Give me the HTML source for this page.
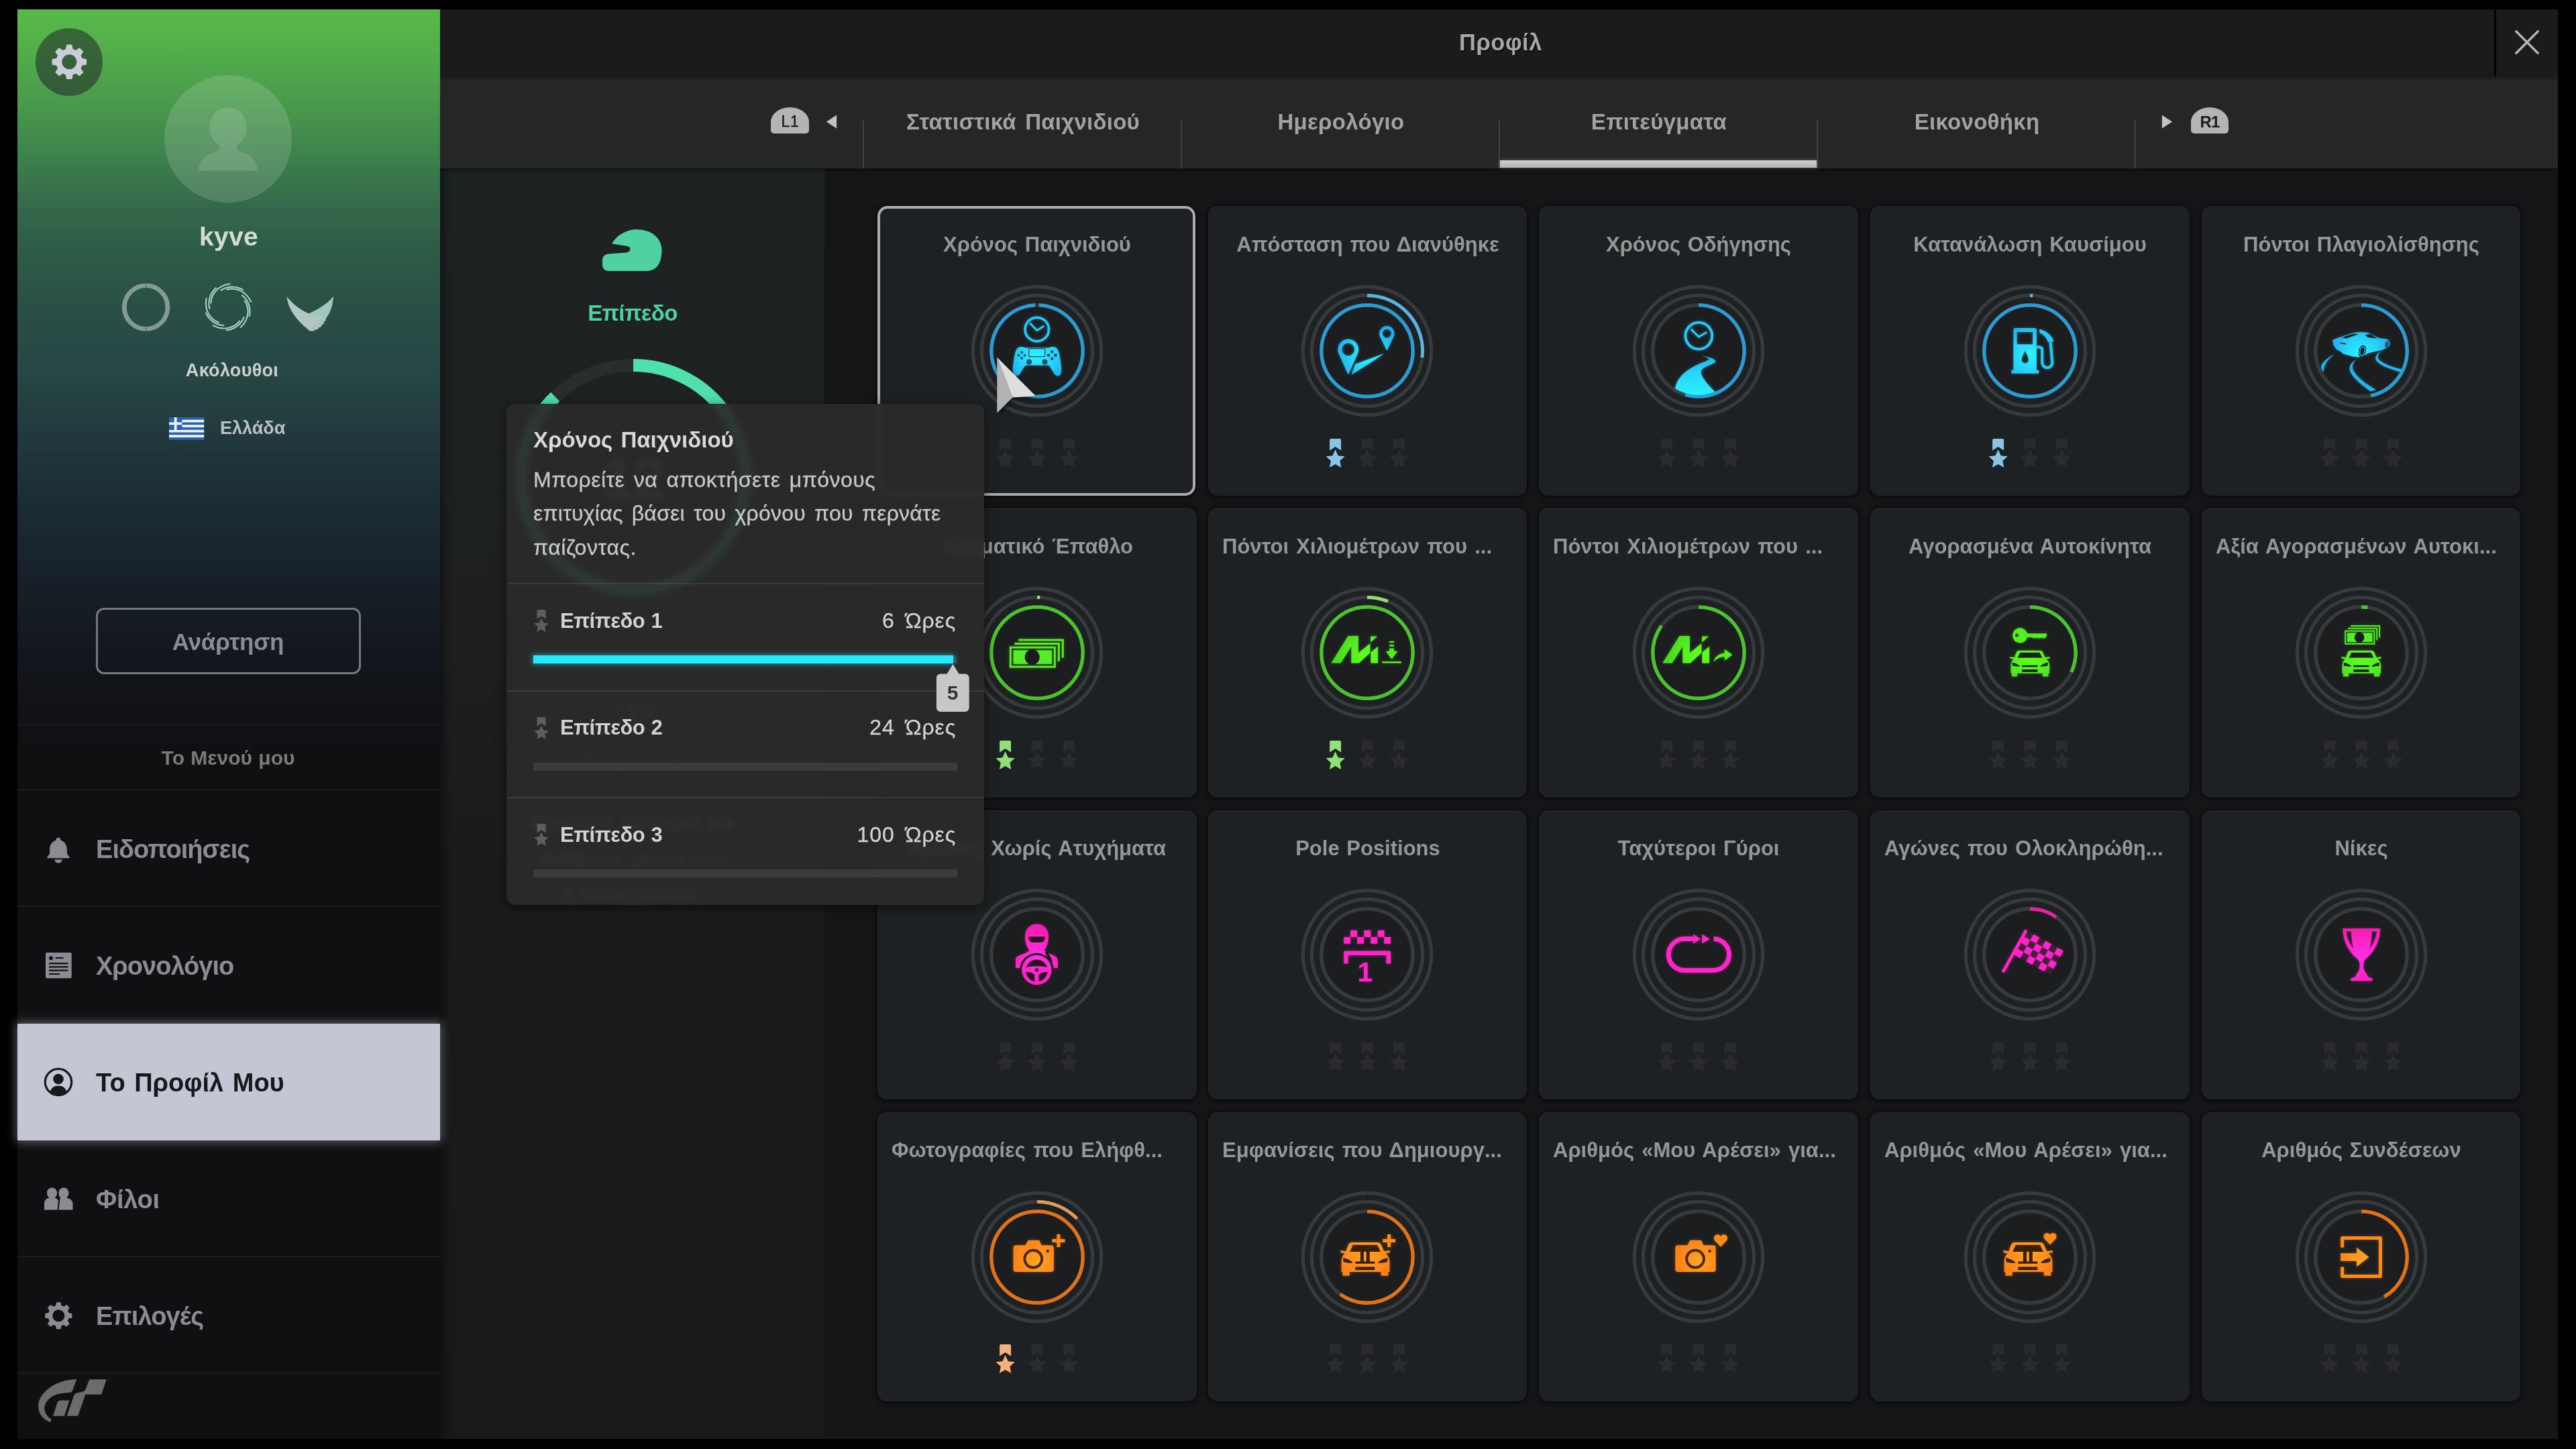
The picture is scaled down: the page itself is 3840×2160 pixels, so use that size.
<!DOCTYPE html><html lang="el"><head><meta charset="utf-8"><title>Προφίλ</title><style>
html,body{margin:0;padding:0;background:#000;}
body{width:3840px;height:2160px;position:relative;overflow:hidden;font-family:"Liberation Sans",sans-serif;font-weight:bold;}
.t{position:absolute;white-space:nowrap;line-height:1;will-change:transform;}
.a{position:absolute;overflow:visible;}
#sb{position:absolute;left:26px;top:14px;width:630px;height:2131px;background:linear-gradient(180deg,#58ba4a 0px,#52ad4b 62px,#4a9a4c 138px,#3e834c 214px,#356a4a 290px,#2d5a47 366px,#2a5046 442px,#284945 517px,#243f41 593px,#1f353b 669px,#1b2b34 745px,#18232c 821px,#151c24 897px,#13161c 973px,#111216 1049px,#101012 1110px,#101012 100%);}
.ln{position:absolute;left:26px;width:630px;height:2px;background:#1d1d20;}
#topbar{position:absolute;left:656px;top:14px;width:3157px;height:100px;background:#1b1b1b;}
#tabbar{box-shadow:0 3px 7px rgba(0,0,0,0.45);position:absolute;left:656px;top:113px;width:3157px;height:137.500px;background:linear-gradient(180deg,#181919 0,#252727 9px,#252727 100%);}
#lvl{position:absolute;left:656px;top:250.500px;width:573px;height:1894.500px;background:linear-gradient(180deg,#1f2223 0,#1e2122 25%,#1b1b1c 55%,#19191a 100%);box-shadow:inset 16px 0 14px -10px rgba(0,0,0,0.45);}
#main{position:absolute;left:1229px;top:250.500px;width:2584px;height:1894.500px;background:#161618;}
.card{position:absolute;width:475.500px;height:431.800px;box-sizing:border-box;background:#1e2123;border-radius:14px;box-shadow:0 0 0 1px rgba(10,10,12,0.55),0 1px 7px 2px rgba(0,0,0,0.55),inset 1px 1px 0 rgba(255,255,255,0.03);}
.card.sel{border:4.500px solid #aaaaaa;border-radius:15px;width:474px;}
#tip{position:absolute;left:754.500px;top:601.500px;width:712px;height:747.700px;border-radius:13px;background:rgba(42,42,42,0.93);-webkit-backdrop-filter:blur(4px);backdrop-filter:blur(4px);box-shadow:0 4px 16px 2px rgba(0,0,0,0.42);}
</style></head><body>
<div id="main"></div>
<div id="lvl"></div>
<svg class="a" style="left:898.2px;top:342.4px" width="89" height="62.500" viewBox="0 0 89 62.500"><path fill="#4fd1a1" d="M14.300,21.300 C20,10 35,0 51,0 C72,0 88.500,12 88.500,31 C88.500,48 82,62 66,62 H10 C3,62 0,58 0,52 V46 C0,40 4,37 9,36.500 L35,34.500 C40,34 41.500,31 41.500,29 C41.500,27 40,25.500 37,25Z"/></svg>
<div class="t" style="top:449.8px;font-size:33px;color:#4fd1a1;letter-spacing:-0.55px;left:-57.5px;width:2000px;text-align:center;">Επίπεδο</div>
<svg class="a" style="left:744px;top:511.800px" width="400" height="400" viewBox="-200 -200 400 400"><circle r="167.5" fill="none" stroke="#2b2d2d" stroke-width="19"/><path d="M0,-167.5 A167.5,167.5 0 1 1 -116.36,-120.49" fill="none" stroke="#4fe0ac" stroke-width="19"/></svg>
<div class="t" style="top:669.9px;font-size:84px;color:#e0e0e0;left:-56.0px;width:2000px;text-align:center;opacity:0.55;">12</div>
<div class="t" style="top:1043.1px;font-size:40px;color:#e0e0e0;font-weight:normal;left:-56.0px;width:2000px;text-align:center;opacity:0.5;">119</div>
<div class="t" style="top:1119.5px;font-size:36px;color:#4fd1a1;left:-56.0px;width:2000px;text-align:center;opacity:0.5;">Εμπειρία</div>
<div class="t" style="top:1209.9px;font-size:32px;color:#d4d4d4;font-weight:normal;left:-56.0px;width:2000px;text-align:center;opacity:0.8;">Κερδίστε εμπειρία και</div>
<div class="t" style="top:1263.9px;font-size:32px;color:#d4d4d4;font-weight:normal;left:-56.0px;width:2000px;text-align:center;opacity:0.8;">βαθμούς μέσω των</div>
<div class="t" style="top:1314.9px;font-size:32px;color:#d4d4d4;font-weight:normal;left:-56.0px;width:2000px;text-align:center;opacity:0.8;">Επιτευγμάτων.</div>
<div id="topbar"></div>
<div id="tabbar"></div>
<div class="t" style="top:46.1px;font-size:34.5px;color:#a6a6a6;letter-spacing:0.5px;left:1236.8px;width:2000px;text-align:center;text-shadow:1.5px 2px 1px rgba(0,0,0,0.55);">Προφίλ</div>
<div style="position:absolute;left:3718px;top:14px;width:3px;height:98.500px;background:#000"></div>
<svg class="a" style="left:3746px;top:42px" width="42" height="42" viewBox="-21 -21 42 42"><path d="M-17.200,-17.200L17.200,17.200M17.200,-17.200L-17.200,17.200" stroke="#b5b5b5" stroke-width="3.4"/></svg>
<div style="position:absolute;left:1285.8px;top:178.5px;width:2px;height:72px;background:#3f4141"></div>
<div style="position:absolute;left:1760px;top:178.5px;width:2px;height:72px;background:#3f4141"></div>
<div style="position:absolute;left:2234px;top:178.5px;width:2px;height:72px;background:#3f4141"></div>
<div style="position:absolute;left:2708px;top:178.5px;width:2px;height:72px;background:#3f4141"></div>
<div style="position:absolute;left:3182px;top:178.5px;width:2px;height:72px;background:#3f4141"></div>
<div class="t" style="top:164.9px;font-size:33px;color:#a2a2a2;letter-spacing:0.25px;word-spacing:4px;left:524.5px;width:2000px;text-align:center;">Στατιστικά Παιχνιδιού</div>
<div class="t" style="top:164.9px;font-size:33px;color:#a2a2a2;letter-spacing:0.3px;left:998.5px;width:2000px;text-align:center;">Ημερολόγιο</div>
<div class="t" style="top:164.9px;font-size:33px;color:#a2a2a2;letter-spacing:0.3px;left:1472.5px;width:2000px;text-align:center;">Επιτεύγματα</div>
<div class="t" style="top:164.9px;font-size:33px;color:#a2a2a2;letter-spacing:0.3px;left:1946.5px;width:2000px;text-align:center;">Εικονοθήκη</div>
<div style="position:absolute;left:2236px;top:239px;width:472px;height:11px;background:linear-gradient(#d0d0d0,#b4b4b4);box-shadow:0 0 6px rgba(255,255,255,0.25)"></div>
<div style="position:absolute;top:160.200px;width:57.200px;height:38.800px;background:#b5b3b3;border-radius:28px 28px 5px 5px / 22px 22px 5px 5px;left:1148.900px"></div>
<div class="t" style="top:169.5px;font-size:23px;color:#1b1b1b;font-weight:normal;letter-spacing:0.8px;left:177.5px;width:2000px;text-align:center;-webkit-text-stroke:0.45px #1b1b1b;">L1</div>
<svg class="a" style="left:1231px;top:170px" width="18" height="24" viewBox="0 0 18 24"><path d="M0.900,11.500L16.100,1.400V21.600Z" fill="#c2c2c2"/></svg>
<div style="position:absolute;top:160.200px;width:57.200px;height:38.800px;background:#b5b3b3;border-radius:28px 28px 5px 5px / 22px 22px 5px 5px;left:3266.300px;width:56.200px"></div>
<div class="t" style="top:169.7px;font-size:24px;color:#1b1b1b;letter-spacing:-0.9px;left:2294.2px;width:2000px;text-align:center;">R1</div>
<svg class="a" style="left:3221px;top:170px" width="18" height="24" viewBox="0 0 18 24"><path d="M17.100,11.500L1.900,1.400V21.600Z" fill="#c2c2c2"/></svg>
<div id="sb"></div>
<div style="position:absolute;left:52.8px;top:42px;width:100.6px;height:100.6px;border-radius:50%;background:rgba(32,38,40,0.55)"></div>
<svg class="a" style="left:52.8px;top:42px" width="100.6" height="100.6" viewBox="0 0 100.6 100.6"><path fill="#c9cdd5" fill-rule="evenodd" stroke="#c9cdd5" stroke-width="2" stroke-linejoin="round" d="M45.86,31.82 L46.97,25.52 L53.63,25.52 L54.74,31.82 L60.23,34.10 L65.47,30.43 L70.17,35.13 L66.50,40.37 L68.78,45.86 L75.08,46.97 L75.08,53.63 L68.78,54.74 L66.50,60.23 L70.17,65.47 L65.47,70.17 L60.23,66.50 L54.74,68.78 L53.63,75.08 L46.97,75.08 L45.86,68.78 L40.37,66.50 L35.13,70.17 L30.43,65.47 L34.10,60.23 L31.82,54.74 L25.52,53.63 L25.52,46.97 L31.82,45.86 L34.10,40.37 L30.43,35.13 L35.13,30.43 L40.37,34.10Z M38.30,50.30 a12,12 0 1,0 24,0 a12,12 0 1,0 -24,0Z"/></svg>
<div style="position:absolute;left:245px;top:112px;width:190px;height:190px;border-radius:50%;background:rgba(255,255,255,0.145);overflow:hidden"></div>
<svg class="a" style="left:245px;top:112px" width="190" height="190" viewBox="0 0 190 190"><path fill="rgba(255,255,255,0.13)" d="M95,48 a27,27 0 0 1 27,27 v6 a27,27 0 0 1 -14,23.5 v4 c0,3 2,5 6,6 c14,3 24,12 25,28 h-88 c1,-16 11,-25 25,-28 c4,-1 6,-3 6,-6 v-4 a27,27 0 0 1 -14,-23.5 v-6 a27,27 0 0 1 27,-27z"/></svg>
<div class="t" style="top:333.0px;font-size:39px;color:#d3dcd3;letter-spacing:0.3px;left:-659.5px;width:2000px;text-align:center;">kyve</div>
<svg class="a" style="left:177px;top:418px" width="330" height="80" viewBox="177 418 330 80">
 <circle cx="217.6" cy="458" r="32.3" fill="none" stroke="rgba(235,245,240,0.46)" stroke-width="6.8"/>
 <path d="M217.6,421v9M217.6,486v9" stroke="rgba(40,80,70,0.6)" stroke-width="1.2"/>
 <g fill="none" stroke="#a3d5c6" stroke-width="2.100" stroke-linecap="round" stroke-linejoin="round" transform="translate(340.1,458.2)">
  <path transform="rotate(4)" d="M0.00,-35.00 L-3.98,-34.06 L-7.74,-32.68 L-11.24,-30.89 L-14.44,-28.75 L-17.29,-26.28 L-19.77,-23.56 L-21.85,-20.62 L-23.53,-17.52 L-24.79,-14.31 L-25.63,-11.06 L-26.07,-7.80 L-26.10,-4.60"/>
  <path transform="rotate(40)" d="M0.00,-34.20 L-3.03,-33.51 L-5.94,-32.57 L-8.70,-31.37 L-11.30,-29.94 L-13.71,-28.31 L-15.92,-26.49 L-17.91,-24.51 L-19.69,-22.38 L-21.22,-20.14 L-22.52,-17.81 L-23.57,-15.41 L-24.38,-12.96"/>
  <path transform="rotate(76)" d="M0.00,-35.00 L-3.98,-34.06 L-7.74,-32.68 L-11.24,-30.89 L-14.44,-28.75 L-17.29,-26.28 L-19.77,-23.56 L-21.85,-20.62 L-23.53,-17.52 L-24.79,-14.31 L-25.63,-11.06 L-26.07,-7.80 L-26.10,-4.60"/>
  <path transform="rotate(112)" d="M0.00,-34.20 L-3.03,-33.51 L-5.94,-32.57 L-8.70,-31.37 L-11.30,-29.94 L-13.71,-28.31 L-15.92,-26.49 L-17.91,-24.51 L-19.69,-22.38 L-21.22,-20.14 L-22.52,-17.81 L-23.57,-15.41 L-24.38,-12.96"/>
  <path transform="rotate(148)" d="M0.00,-35.00 L-3.98,-34.06 L-7.74,-32.68 L-11.24,-30.89 L-14.44,-28.75 L-17.29,-26.28 L-19.77,-23.56 L-21.85,-20.62 L-23.53,-17.52 L-24.79,-14.31 L-25.63,-11.06 L-26.07,-7.80 L-26.10,-4.60"/>
  <path transform="rotate(184)" d="M0.00,-34.20 L-3.03,-33.51 L-5.94,-32.57 L-8.70,-31.37 L-11.30,-29.94 L-13.71,-28.31 L-15.92,-26.49 L-17.91,-24.51 L-19.69,-22.38 L-21.22,-20.14 L-22.52,-17.81 L-23.57,-15.41 L-24.38,-12.96"/>
  <path transform="rotate(220)" d="M0.00,-35.00 L-3.98,-34.06 L-7.74,-32.68 L-11.24,-30.89 L-14.44,-28.75 L-17.29,-26.28 L-19.77,-23.56 L-21.85,-20.62 L-23.53,-17.52 L-24.79,-14.31 L-25.63,-11.06 L-26.07,-7.80 L-26.10,-4.60"/>
  <path transform="rotate(256)" d="M0.00,-34.20 L-3.03,-33.51 L-5.94,-32.57 L-8.70,-31.37 L-11.30,-29.94 L-13.71,-28.31 L-15.92,-26.49 L-17.91,-24.51 L-19.69,-22.38 L-21.22,-20.14 L-22.52,-17.81 L-23.57,-15.41 L-24.38,-12.96"/>
  <path transform="rotate(292)" d="M0.00,-35.00 L-3.98,-34.06 L-7.74,-32.68 L-11.24,-30.89 L-14.44,-28.75 L-17.29,-26.28 L-19.77,-23.56 L-21.85,-20.62 L-23.53,-17.52 L-24.79,-14.31 L-25.63,-11.06 L-26.07,-7.80 L-26.10,-4.60"/>
  <path transform="rotate(328)" d="M0.00,-34.20 L-3.03,-33.51 L-5.94,-32.57 L-8.70,-31.37 L-11.30,-29.94 L-13.71,-28.31 L-15.92,-26.49 L-17.91,-24.51 L-19.69,-22.38 L-21.22,-20.14 L-22.52,-17.81 L-23.57,-15.41 L-24.38,-12.96"/>
 </g>
 <g transform="translate(461.8,458)">
  <path fill="#9dc8bb" d="M35.300,-16.400 C34.500,-6 32,8 23.700,17 L-11.300,13 C4,8 24,-2 35.300,-16.400Z"/>
  <path fill="#b3c6c1" d="M-34.300,-16 C-33,-4 -27,14 0,35.300 C3,34 6,32 8,29 L-2.300,9.200 C-14,4 -26,-5 -34.300,-16Z"/>
  <path fill="#b3c6c1" d="M-2.300,9.200 L-11.300,13 C-8,15 -2,15 2,13.500 C7,11.500 12,12 16,13.500 L23.700,17 C24.500,19 23.500,21 21,21.500 C21.500,24 20,26 17.500,26 C18,28.500 16,30.500 13.500,30 C13.500,32.500 11,34 8.500,33 C7,35.500 3,36 0,35.300 L-8,25Z"/>
  <path fill="none" stroke="#88b0a4" stroke-width="0.800" d="M12,19 L21,21.500 M9,23 L17.500,26 M6,27 L13.500,30 M3,30.500 L8.500,33"/>
 </g>
</svg>
<div class="t" style="top:539.4px;font-size:27px;color:#c9d2cd;letter-spacing:0.3px;left:-654.0px;width:2000px;text-align:center;">Ακόλουθοι</div>
<svg class="a" style="left:252px;top:621.6px" width="52.2" height="33.8" viewBox="0 0 27 18" preserveAspectRatio="none"><rect width="27" height="18" fill="#2a62ad"/><path d="M0,3h27M0,7h27M0,11h27M0,15h27" stroke="#eef1f6" stroke-width="2"/><rect width="10" height="10" fill="#2a62ad"/><path d="M5,0v10M0,5h10" stroke="#eef1f6" stroke-width="2"/></svg>
<div class="t" style="top:624.6px;font-size:27px;color:#b9c1c1;left:328.0px;">Ελλάδα</div>
<div style="position:absolute;left:142.5px;top:905.5px;width:395px;height:99px;box-sizing:border-box;border:3px solid #75777d;border-radius:12px"></div>
<div class="t" style="top:938.7px;font-size:35px;color:#8b8c91;letter-spacing:-0.2px;left:-660.0px;width:2000px;text-align:center;">Ανάρτηση</div>
<div class="ln" style="top:1080px"></div>
<div class="ln" style="top:1176px"></div>
<div class="ln" style="top:1350px"></div>
<div class="ln" style="top:1872px"></div>
<div class="ln" style="top:2045.5px"></div>
<div class="t" style="top:1114.8px;font-size:30px;color:#7b7b7e;word-spacing:1px;left:-660.0px;width:2000px;text-align:center;">Το Μενού μου</div>
<div style="position:absolute;left:26px;top:1526px;width:630px;height:173.5px;background:#c3c7d3;box-shadow:0 0 14px 2px rgba(195,199,211,0.45)"></div>
<div class="t" style="top:1247.1px;font-size:38px;color:#8b8c93;letter-spacing:-0.95px;left:143.0px;">Ειδοποιήσεις</div>
<div class="t" style="top:1421.1px;font-size:38px;color:#8b8c93;letter-spacing:-1.0px;left:143.0px;">Χρονολόγιο</div>
<div class="t" style="top:1595.1px;font-size:38px;color:#17181c;word-spacing:3px;left:143.0px;">Το Προφίλ Μου</div>
<div class="t" style="top:1769.1px;font-size:38px;color:#8b8c93;letter-spacing:-0.3px;left:143.0px;">Φίλοι</div>
<div class="t" style="top:1943.1px;font-size:38px;color:#8b8c93;letter-spacing:-0.86px;left:143.0px;">Επιλογές</div>
<svg class="a" style="left:66.700px;top:1245.500px" width="40" height="41.900" viewBox="-21 -22 42 44"><path fill="#8b8c93" d="M0,-19.5 a3.3,3.3 0 0 1 3.3,3.3 v1 c6.5,1.8 10.2,7.5 10.2,14.5 v6.5 l4,5.5 v1.7 h-35 v-1.7 l4,-5.5 v-6.5 c0,-7 3.7,-12.700 10.2,-14.5 v-1 a3.3,3.3 0 0 1 3.3,-3.300z M-6,15 h12 a6,5.5 0 0 1 -12,0z"/></svg>
<svg class="a" style="left:68px;top:1420.4px" width="38.7" height="38.3" viewBox="0 0 38.7 38.3"><path fill="#8b8c93" fill-rule="evenodd" d="M2,0h34.700a2,2 0 0 1 2,2v34.300a2,2 0 0 1 -2,2h-34.700a2,2 0 0 1 -2,-2v-34.300a2,2 0 0 1 2,-2z M5,8.200a3,3 0 1 0 6,0a3,3 0 1 0 -6,0z M14.500,7h12v2h-12z M5,15h28.500v2.200h-28.500z M5,20.300h28.500v2.200h-28.500z M5,25.600h28.500v2.200h-28.500z M5,30.900h16v2.200h-16z"/></svg>
<svg class="a" style="left:64px;top:1590px" width="46" height="46" viewBox="-23 -23 46 46"><defs><clipPath id="pc"><circle r="18.3"/></clipPath></defs><circle r="19.7" fill="none" stroke="#17181c" stroke-width="3.2"/><g clip-path="url(#pc)" fill="#17181c"><circle cy="-4.500" r="7.800"/><path d="M-13,21 c0,-11 5,-15.500 13,-15.500 s13,4.500 13,15.500z"/></g></svg>
<svg class="a" style="left:66px;top:1770px" width="42.500" height="34" viewBox="0 0 42.500 34"><path fill="#8b8c93" d="M12,0.500 a7,7.500 0 0 1 7,7.500 c0,3.500 -1.500,6 -3.500,7.500 c3,1 5,2.500 5.500,5 l-1.500,13 h-19.500 v-9 c0,-5 3,-8 7.500,-9 c-2,-1.500 -3.500,-4 -3.500,-7.500 a7,7.500 0 0 1 8,-7.500z M29.500,0.500 a7,7.500 0 0 1 7,7.500 c0,3.500 -1.500,6 -3.500,7.500 c5,1 9.500,4 9.500,9 v9 h-21 l1.500,-13 c0.500,-2.500 -0.500,-3.500 1.500,-4.500 c-2,-1.500 -3,-4.500 -3,-7.500 a7,7.500 0 0 1 8,-8z"/></svg>
<svg class="a" style="left:64px;top:1937.5px" width="46.6" height="46.6" viewBox="0 0 46.6 46.6"><path fill="#8b8c93" fill-rule="evenodd" stroke="#8b8c93" stroke-width="1.5" stroke-linejoin="round" d="M19.80,8.71 L20.70,3.97 L25.90,3.97 L26.80,8.71 L31.14,10.51 L35.13,7.80 L38.80,11.47 L36.09,15.46 L37.89,19.80 L42.63,20.70 L42.63,25.90 L37.89,26.80 L36.09,31.14 L38.80,35.13 L35.13,38.80 L31.14,36.09 L26.80,37.89 L25.90,42.63 L20.70,42.63 L19.80,37.89 L15.46,36.09 L11.47,38.80 L7.80,35.13 L10.51,31.14 L8.71,26.80 L3.97,25.90 L3.97,20.70 L8.71,19.80 L10.51,15.46 L7.80,11.47 L11.47,7.80 L15.46,10.51Z M13.50,23.30 a9.8,9.8 0 1,0 19.6,0 a9.8,9.8 0 1,0 -19.6,0Z"/></svg>
<svg class="a" style="left:40px;top:2040px" width="160" height="100" viewBox="0 0 2318 1449"><g fill="#6c6c6e"><path d="M1075,232 C800,235 520,340 340,560 C230,700 220,860 300,1000 C350,1080 420,1130 500,1160 L535,1100 C440,1040 385,960 380,850 C385,740 470,620 640,560 C740,530 830,528 920,520 C960,515 980,500 990,470 Z"/><path d="M720,690 L920,690 L810,1025 L565,1025 L650,760 C665,715 685,692 720,690Z"/><path d="M1350,235 L1720,235 L1610,560 L1270,560 L1250,600 L1105,1025 L865,1025 L1010,600 C1025,560 1040,540 1080,530 L1190,505 C1240,495 1260,470 1275,430Z"/></g></svg>
<svg width="0" height="0" style="position:absolute"><defs><radialGradient id="gb" gradientUnits="userSpaceOnUse" cx="0" cy="6" r="46"><stop offset="0" stop-color="#2ff2ff"/><stop offset="0.55" stop-color="#28d2fa"/><stop offset="1" stop-color="#22aeea"/></radialGradient><radialGradient id="gg" gradientUnits="userSpaceOnUse" cx="0" cy="6" r="46"><stop offset="0" stop-color="#62ff20"/><stop offset="0.55" stop-color="#55ee22"/><stop offset="1" stop-color="#48d81f"/></radialGradient><radialGradient id="gm" gradientUnits="userSpaceOnUse" cx="0" cy="6" r="46"><stop offset="0" stop-color="#ff30e8"/><stop offset="0.55" stop-color="#ff25c8"/><stop offset="1" stop-color="#f01fb0"/></radialGradient><radialGradient id="go" gradientUnits="userSpaceOnUse" cx="0" cy="6" r="46"><stop offset="0" stop-color="#ffa628"/><stop offset="0.55" stop-color="#ff8a1c"/><stop offset="1" stop-color="#f27a16"/></radialGradient><linearGradient id="groad" gradientUnits="userSpaceOnUse" x1="0" y1="8" x2="0" y2="64"><stop offset="0" stop-color="#22b4ec"/><stop offset="0.45" stop-color="#27d6fb"/><stop offset="1" stop-color="#2cf0ff"/></linearGradient><filter id="fb" x="-30%" y="-30%" width="160%" height="160%"><feGaussianBlur stdDeviation="2.6"/></filter><filter id="fg" x="-30%" y="-30%" width="160%" height="160%"><feGaussianBlur stdDeviation="2.6"/></filter><filter id="fm" x="-30%" y="-30%" width="160%" height="160%"><feGaussianBlur stdDeviation="2.6"/></filter><filter id="fo" x="-30%" y="-30%" width="160%" height="160%"><feGaussianBlur stdDeviation="2.6"/></filter></defs></svg>
<div class="card sel" style="left:1308.0px;top:307.4px"></div>
<div class="t" style="top:348.7px;font-size:31px;color:#969696;word-spacing:2px;left:546.2px;width:2000px;text-align:center;">Χρόνος Παιχνιδιού</div>
<svg class="a" style="left:1440.7px;top:418.3px" width="210" height="210" viewBox="-105 -105 210 210"><circle r="66" fill="#1b1d1f"/><circle r="95.700" fill="none" stroke="#37393a" stroke-width="5.200"/><circle r="82.600" fill="none" stroke="#37393a" stroke-width="5.200"/><circle r="68.200" fill="none" stroke="#37393a" stroke-width="5.600"/><path d="M0,-98.500 V-65.500 M0,65.500 V98.500" stroke="rgba(20,22,24,0.18)" stroke-width="1.100"/><path d="M2.74,-68.15 A68.2,68.2 0 1 1 -2.74,-68.15" fill="none" stroke="#2b9bd2" stroke-width="5.3"/><g filter="url(#fb)" opacity="0.38"><circle cx="-0.2" cy="-32" r="17.7" fill="none" stroke="#27c6f5" stroke-width="3.8"/><path d="M-9.899999999999999,-40.4 L-0.2,-30.5 L9.200000000000001,-36.3" fill="none" stroke="#27c6f5" stroke-width="3.2" stroke-linejoin="miter" stroke-linecap="round"/><path fill="url(#gb)" d="M-27,-5.5 C-24,-6.500 -20,-6 -17,-4.500 L17,-4.500 C20,-6 24,-6.500 27,-5.500 C31,-4 33,2 34.500,12 C36,22 37,30 35,35 C33,38.500 28,38 25.500,34 L19,23.500 C18,22 16.500,21.500 15,21.500 L-15,21.500 C-16.500,21.500 -18,22 -19,23.500 L-25.500,34 C-28,38 -33,38.500 -35,35 C-37,30 -36,22 -34.500,12 C-33,2 -31,-4 -27,-5.500Z"/><rect x="-12.3" y="-3.4" width="24" height="12" rx="1" fill="none" stroke="#0d4a66" stroke-width="1.2"/><circle cx="-12" cy="16.6" r="4" fill="#14506b"/><circle cx="11.5" cy="16.6" r="4" fill="#14506b"/><circle cx="-22.9" cy="2.2" r="1.9" fill="#14506b"/><circle cx="-22.9" cy="11" r="1.9" fill="#14506b"/><circle cx="-27.4" cy="6.6" r="1.9" fill="#14506b"/><circle cx="-18.4" cy="6.6" r="1.9" fill="#14506b"/><circle cx="22.2" cy="1.5" r="2.3" fill="#14506b"/><circle cx="22.2" cy="11.7" r="2.3" fill="#14506b"/><circle cx="17.1" cy="6.6" r="2.3" fill="#14506b"/><circle cx="27.3" cy="6.6" r="2.3" fill="#14506b"/></g><circle cx="-0.2" cy="-32" r="17.7" fill="none" stroke="#27c6f5" stroke-width="3.8"/><path d="M-9.899999999999999,-40.4 L-0.2,-30.5 L9.200000000000001,-36.3" fill="none" stroke="#27c6f5" stroke-width="3.2" stroke-linejoin="miter" stroke-linecap="round"/><path fill="url(#gb)" d="M-27,-5.5 C-24,-6.500 -20,-6 -17,-4.500 L17,-4.500 C20,-6 24,-6.500 27,-5.500 C31,-4 33,2 34.500,12 C36,22 37,30 35,35 C33,38.500 28,38 25.500,34 L19,23.500 C18,22 16.500,21.500 15,21.500 L-15,21.500 C-16.500,21.500 -18,22 -19,23.500 L-25.500,34 C-28,38 -33,38.500 -35,35 C-37,30 -36,22 -34.500,12 C-33,2 -31,-4 -27,-5.500Z"/><rect x="-12.3" y="-3.4" width="24" height="12" rx="1" fill="none" stroke="#0d4a66" stroke-width="1.2"/><circle cx="-12" cy="16.6" r="4" fill="#14506b"/><circle cx="11.5" cy="16.6" r="4" fill="#14506b"/><circle cx="-22.9" cy="2.2" r="1.9" fill="#14506b"/><circle cx="-22.9" cy="11" r="1.9" fill="#14506b"/><circle cx="-27.4" cy="6.6" r="1.9" fill="#14506b"/><circle cx="-18.4" cy="6.6" r="1.9" fill="#14506b"/><circle cx="22.2" cy="1.5" r="2.3" fill="#14506b"/><circle cx="22.2" cy="11.7" r="2.3" fill="#14506b"/><circle cx="17.1" cy="6.6" r="2.3" fill="#14506b"/><circle cx="27.3" cy="6.6" r="2.3" fill="#14506b"/></svg>
<svg class="a" style="left:1475.7px;top:650.7px" width="140" height="54" viewBox="-70 -3 140 54"><path d="M-55.9,2 a2,2 0 0 1 2,-2 h13 a2,2 0 0 1 2,2 v15.500 L-47.4,11.9 L-55.9,17.5Z M-47.40,16.00 L-43.23,25.16 L-33.23,26.30 L-40.65,33.09 L-38.64,42.95 L-47.40,38.00 L-56.16,42.95 L-54.15,33.09 L-61.57,26.30 L-51.57,25.16Z" fill="#2b2b2e"/><path d="M-8.5,2 a2,2 0 0 1 2,-2 h13 a2,2 0 0 1 2,2 v15.500 L0,11.9 L-8.5,17.5Z M0.00,16.00 L4.17,25.16 L14.17,26.30 L6.75,33.09 L8.76,42.95 L0.00,38.00 L-8.76,42.95 L-6.75,33.09 L-14.17,26.30 L-4.17,25.16Z" fill="#2b2b2e"/><path d="M38.9,2 a2,2 0 0 1 2,-2 h13 a2,2 0 0 1 2,2 v15.500 L47.4,11.9 L38.9,17.5Z M47.40,16.00 L51.57,25.16 L61.57,26.30 L54.15,33.09 L56.16,42.95 L47.40,38.00 L38.64,42.95 L40.65,33.09 L33.23,26.30 L43.23,25.16Z" fill="#2b2b2e"/></svg>
<div class="card" style="left:1800.7px;top:307.4px"></div>
<div class="t" style="top:348.7px;font-size:31px;color:#969696;word-spacing:2px;left:1039.0px;width:2000px;text-align:center;">Απόσταση που Διανύθηκε</div>
<svg class="a" style="left:1933.4px;top:418.3px" width="210" height="210" viewBox="-105 -105 210 210"><circle r="66" fill="#1b1d1f"/><circle r="95.700" fill="none" stroke="#37393a" stroke-width="5.200"/><circle r="82.600" fill="none" stroke="#37393a" stroke-width="5.200"/><circle r="68.200" fill="none" stroke="#37393a" stroke-width="5.600"/><path d="M0,-98.500 V-65.500 M0,65.500 V98.500" stroke="rgba(20,22,24,0.18)" stroke-width="1.100"/><circle r="68.2" fill="none" stroke="#2b9bd2" stroke-width="5.3"/><path d="M0.00,-82.60 A82.6,82.6 0 0 1 81.98,10.07" fill="none" stroke="#5ab3de" stroke-width="5.0"/><g filter="url(#fb)" opacity="0.38"><path fill="url(#gb)" fill-rule="evenodd" d="M-28.2,35.8 L-42.34,4.24 A15.5,15.5 0 1 1 -14.06,4.24Z M-37.5,-2.1 a9.3,9.3 0 1 0 18.6,0 a9.3,9.3 0 1 0 -18.6,0Z"/><path fill="url(#gb)" fill-rule="evenodd" d="M29.4,0 L19.30,-21.06 A11.2,11.2 0 1 1 39.50,-21.06Z M23.0,-25.9 a6.4,6.4 0 1 0 12.8,0 a6.4,6.4 0 1 0 -12.8,0Z"/><path fill="url(#gb)" d="M26.3,3.500 L-17.800,19.700 L-23.400,35.800 C-10,27 10,15 26.300,3.500Z"/></g><path fill="url(#gb)" fill-rule="evenodd" d="M-28.2,35.8 L-42.34,4.24 A15.5,15.5 0 1 1 -14.06,4.24Z M-37.5,-2.1 a9.3,9.3 0 1 0 18.6,0 a9.3,9.3 0 1 0 -18.6,0Z"/><path fill="url(#gb)" fill-rule="evenodd" d="M29.4,0 L19.30,-21.06 A11.2,11.2 0 1 1 39.50,-21.06Z M23.0,-25.9 a6.4,6.4 0 1 0 12.8,0 a6.4,6.4 0 1 0 -12.8,0Z"/><path fill="url(#gb)" d="M26.3,3.500 L-17.800,19.700 L-23.400,35.800 C-10,27 10,15 26.300,3.500Z"/></svg>
<svg class="a" style="left:1968.4px;top:650.7px" width="140" height="54" viewBox="-70 -3 140 54"><path d="M-55.9,2 a2,2 0 0 1 2,-2 h13 a2,2 0 0 1 2,2 v15.500 L-47.4,11.9 L-55.9,17.5Z" fill="#8ac4e2"/><path d="M-47.40,16.00 L-43.23,25.16 L-33.23,26.30 L-40.65,33.09 L-38.64,42.95 L-47.40,38.00 L-56.16,42.95 L-54.15,33.09 L-61.57,26.30 L-51.57,25.16Z" fill="#8ac4e2" stroke="#0e2230" stroke-width="2.2" paint-order="stroke" stroke-linejoin="miter"/><path d="M-8.5,2 a2,2 0 0 1 2,-2 h13 a2,2 0 0 1 2,2 v15.500 L0,11.9 L-8.5,17.5Z M0.00,16.00 L4.17,25.16 L14.17,26.30 L6.75,33.09 L8.76,42.95 L0.00,38.00 L-8.76,42.95 L-6.75,33.09 L-14.17,26.30 L-4.17,25.16Z" fill="#2b2b2e"/><path d="M38.9,2 a2,2 0 0 1 2,-2 h13 a2,2 0 0 1 2,2 v15.500 L47.4,11.9 L38.9,17.5Z M47.40,16.00 L51.57,25.16 L61.57,26.30 L54.15,33.09 L56.16,42.95 L47.40,38.00 L38.64,42.95 L40.65,33.09 L33.23,26.30 L43.23,25.16Z" fill="#2b2b2e"/></svg>
<div class="card" style="left:2294.0px;top:307.4px"></div>
<div class="t" style="top:348.7px;font-size:31px;color:#969696;word-spacing:2px;left:1532.2px;width:2000px;text-align:center;">Χρόνος Οδήγησης</div>
<svg class="a" style="left:2426.7px;top:418.3px" width="210" height="210" viewBox="-105 -105 210 210"><circle r="66" fill="#1b1d1f"/><circle r="95.700" fill="none" stroke="#37393a" stroke-width="5.200"/><circle r="82.600" fill="none" stroke="#37393a" stroke-width="5.200"/><circle r="68.200" fill="none" stroke="#37393a" stroke-width="5.600"/><path d="M0,-98.500 V-65.500 M0,65.500 V98.500" stroke="rgba(20,22,24,0.18)" stroke-width="1.100"/><path d="M0.00,-68.20 A68.2,68.2 0 1 1 -19.94,65.22" fill="none" stroke="#2b9bd2" stroke-width="5.3"/><g filter="url(#fb)" opacity="0.38"><circle cx="0.3" cy="-22.4" r="19.9" fill="none" stroke="#27c6f5" stroke-width="4.1"/><path d="M-10.5,-31.5 L0.3,-20.9 L11.200000000000001,-27.2" fill="none" stroke="#27c6f5" stroke-width="3.2" stroke-linejoin="miter" stroke-linecap="round"/><path fill="url(#groad)" d="M4.400,7.600 C14,9 24,11.500 25.500,15 C26,19 12,22 6,27 C0,32 6,42 24.300,61 A66,66 0 0 1 -35,56 C-32,40 -20,30 -3,21.300 C6,17 14,15 15.600,12.600 C14,10 9,9 4.400,7.600Z"/></g><circle cx="0.3" cy="-22.4" r="19.9" fill="none" stroke="#27c6f5" stroke-width="4.1"/><path d="M-10.5,-31.5 L0.3,-20.9 L11.200000000000001,-27.2" fill="none" stroke="#27c6f5" stroke-width="3.2" stroke-linejoin="miter" stroke-linecap="round"/><path fill="url(#groad)" d="M4.400,7.600 C14,9 24,11.500 25.500,15 C26,19 12,22 6,27 C0,32 6,42 24.300,61 A66,66 0 0 1 -35,56 C-32,40 -20,30 -3,21.300 C6,17 14,15 15.600,12.600 C14,10 9,9 4.400,7.600Z"/></svg>
<svg class="a" style="left:2461.7px;top:650.7px" width="140" height="54" viewBox="-70 -3 140 54"><path d="M-55.9,2 a2,2 0 0 1 2,-2 h13 a2,2 0 0 1 2,2 v15.500 L-47.4,11.9 L-55.9,17.5Z M-47.40,16.00 L-43.23,25.16 L-33.23,26.30 L-40.65,33.09 L-38.64,42.95 L-47.40,38.00 L-56.16,42.95 L-54.15,33.09 L-61.57,26.30 L-51.57,25.16Z" fill="#2b2b2e"/><path d="M-8.5,2 a2,2 0 0 1 2,-2 h13 a2,2 0 0 1 2,2 v15.500 L0,11.9 L-8.5,17.5Z M0.00,16.00 L4.17,25.16 L14.17,26.30 L6.75,33.09 L8.76,42.95 L0.00,38.00 L-8.76,42.95 L-6.75,33.09 L-14.17,26.30 L-4.17,25.16Z" fill="#2b2b2e"/><path d="M38.9,2 a2,2 0 0 1 2,-2 h13 a2,2 0 0 1 2,2 v15.500 L47.4,11.9 L38.9,17.5Z M47.40,16.00 L51.57,25.16 L61.57,26.30 L54.15,33.09 L56.16,42.95 L47.40,38.00 L38.64,42.95 L40.65,33.09 L33.23,26.30 L43.23,25.16Z" fill="#2b2b2e"/></svg>
<div class="card" style="left:2788.0px;top:307.4px"></div>
<div class="t" style="top:348.7px;font-size:31px;color:#969696;word-spacing:2px;left:2026.2px;width:2000px;text-align:center;">Κατανάλωση Καυσίμου</div>
<svg class="a" style="left:2920.7px;top:418.3px" width="210" height="210" viewBox="-105 -105 210 210"><circle r="66" fill="#1b1d1f"/><circle r="95.700" fill="none" stroke="#37393a" stroke-width="5.200"/><circle r="82.600" fill="none" stroke="#37393a" stroke-width="5.200"/><circle r="68.200" fill="none" stroke="#37393a" stroke-width="5.600"/><path d="M0,-98.500 V-65.500 M0,65.500 V98.500" stroke="rgba(20,22,24,0.18)" stroke-width="1.100"/><circle r="68.2" fill="none" stroke="#2b9bd2" stroke-width="5.3"/><path d="M0.00,-82.60 A82.6,82.6 0 0 1 4.32,-82.49" fill="none" stroke="#5ab3de" stroke-width="5.0"/><g filter="url(#fb)" opacity="0.38"><path fill="url(#gb)" fill-rule="evenodd" d="M-21.600,-34 H6.900 a3,3 0 0 1 3,3 V28.700 H13.300 V33.700 H-27.700 V28.700 H-24.600 V-31 a3,3 0 0 1 3,-3Z M-19.400,-28 V-9.800 H4.200 V-28Z M-7.200,-0.200 C-5,5 -2.100,9.500 -2.100,13.400 a5.100,5.100 0 0 1 -10.200,0 C-12.300,9.500 -9.400,5 -7.200,-0.200Z"/><path fill="none" stroke="#27c6f5" stroke-width="4.3" d="M9,-5.600 H13.500 Q18.200,-5.600 18.200,-1 V17.500 A7.600,7.600 0 0 0 33.400,17.500 L30.600,-13.500"/><path fill="#27c6f5" d="M14.200,-32.500 C24,-30 33,-23 35.700,-13.900 L27,-13 C25,-19 20,-24.500 14.200,-27.200Z"/></g><path fill="url(#gb)" fill-rule="evenodd" d="M-21.600,-34 H6.900 a3,3 0 0 1 3,3 V28.700 H13.300 V33.700 H-27.700 V28.700 H-24.600 V-31 a3,3 0 0 1 3,-3Z M-19.400,-28 V-9.800 H4.200 V-28Z M-7.200,-0.200 C-5,5 -2.100,9.500 -2.100,13.400 a5.100,5.100 0 0 1 -10.200,0 C-12.300,9.500 -9.400,5 -7.200,-0.200Z"/><path fill="none" stroke="#27c6f5" stroke-width="4.3" d="M9,-5.600 H13.500 Q18.200,-5.600 18.200,-1 V17.500 A7.600,7.600 0 0 0 33.400,17.500 L30.600,-13.500"/><path fill="#27c6f5" d="M14.200,-32.500 C24,-30 33,-23 35.700,-13.900 L27,-13 C25,-19 20,-24.500 14.200,-27.200Z"/></svg>
<svg class="a" style="left:2955.7px;top:650.7px" width="140" height="54" viewBox="-70 -3 140 54"><path d="M-55.9,2 a2,2 0 0 1 2,-2 h13 a2,2 0 0 1 2,2 v15.500 L-47.4,11.9 L-55.9,17.5Z" fill="#8ac4e2"/><path d="M-47.40,16.00 L-43.23,25.16 L-33.23,26.30 L-40.65,33.09 L-38.64,42.95 L-47.40,38.00 L-56.16,42.95 L-54.15,33.09 L-61.57,26.30 L-51.57,25.16Z" fill="#8ac4e2" stroke="#0e2230" stroke-width="2.2" paint-order="stroke" stroke-linejoin="miter"/><path d="M-8.5,2 a2,2 0 0 1 2,-2 h13 a2,2 0 0 1 2,2 v15.500 L0,11.9 L-8.5,17.5Z M0.00,16.00 L4.17,25.16 L14.17,26.30 L6.75,33.09 L8.76,42.95 L0.00,38.00 L-8.76,42.95 L-6.75,33.09 L-14.17,26.30 L-4.17,25.16Z" fill="#2b2b2e"/><path d="M38.9,2 a2,2 0 0 1 2,-2 h13 a2,2 0 0 1 2,2 v15.500 L47.4,11.9 L38.9,17.5Z M47.40,16.00 L51.57,25.16 L61.57,26.30 L54.15,33.09 L56.16,42.95 L47.40,38.00 L38.64,42.95 L40.65,33.09 L33.23,26.30 L43.23,25.16Z" fill="#2b2b2e"/></svg>
<div class="card" style="left:3281.8px;top:307.4px"></div>
<div class="t" style="top:348.7px;font-size:31px;color:#969696;word-spacing:2px;left:2520.1px;width:2000px;text-align:center;">Πόντοι Πλαγιολίσθησης</div>
<svg class="a" style="left:3414.5px;top:418.3px" width="210" height="210" viewBox="-105 -105 210 210"><circle r="66" fill="#1b1d1f"/><circle r="95.700" fill="none" stroke="#37393a" stroke-width="5.200"/><circle r="82.600" fill="none" stroke="#37393a" stroke-width="5.200"/><circle r="68.200" fill="none" stroke="#37393a" stroke-width="5.600"/><path d="M0,-98.500 V-65.500 M0,65.500 V98.500" stroke="rgba(20,22,24,0.18)" stroke-width="1.100"/><path d="M0.00,-68.20 A68.2,68.2 0 0 1 14.18,66.71" fill="none" stroke="#2b9bd2" stroke-width="5.3"/><g filter="url(#fb)" opacity="0.38"><path fill="url(#gb)" d="M-43,-16.200 L-41.500,-8.500 L-37.700,-2.700 L-29.900,1.700 L-27,4.600 L-12.500,8.400 L-3.800,9.400 L6.800,6 L9.700,3.600 L30.900,-1.200 L35.800,-3.600 L40.600,-5.600 L42.300,-8.500 L42.500,-13.300 L38.700,-17.400 L26.100,-19.100 L11.600,-26.300 C6,-28 -5,-28.200 -12.500,-26.800 L-29.900,-21 L-38.600,-18.100Z"/><path fill="#10222b" d="M-29,-20 L-12.500,-25.600 L-3.800,-24.900 L-22.200,-18.600Z M5.800,-23.900 L13.500,-24.900 L23.700,-18.600 L9.700,-20.100Z M-31.900,-12.800 L-22.700,-10.900 L-23.200,-9.400 L-31.400,-11.300Z"/><ellipse cx="1.5" cy="0.7" rx="5.5" ry="9.1" fill="#10222b" transform="rotate(12 1.5 0.7)"/><ellipse cx="1.5" cy="0.7" rx="3.7" ry="6.9" fill="none" stroke="#27c6f5" stroke-width="1.4" transform="rotate(12 1.5 0.7)"/><ellipse cx="38.2" cy="-9.4" rx="3" ry="5.1" fill="#10222b" transform="rotate(10 38.2 -9.4)"/><ellipse cx="38.2" cy="-9.4" rx="1.8" ry="3.6" fill="none" stroke="#27c6f5" stroke-width="0.9" transform="rotate(10 38.2 -9.4)"/><path fill="#25b4e8" d="M-39.600,4.600 C-50,10 -58,17 -59.900,23 C-60,27 -58,30 -56,31 C-56.500,22 -50,12 -39.600,4.600Z"/><path fill="#25b4e8" d="M-7.200,12.800 C-15,17 -19,23 -16.800,30 C-12,42 2,52 14,60.500 L22,58 C6,49 -8,38 -12.500,28 C-14,22 -12,17 -7.200,12.800Z"/><path fill="#25b4e8" d="M31.900,-0.700 C24,3 20,8 21.500,13 C25,21 42,27 58,31.500 L60,27.500 C45,24 30,18 25.500,12 C23.500,8 26,3 31.900,-0.700Z"/></g><path fill="url(#gb)" d="M-43,-16.200 L-41.500,-8.500 L-37.700,-2.700 L-29.900,1.700 L-27,4.600 L-12.500,8.400 L-3.800,9.400 L6.800,6 L9.700,3.600 L30.900,-1.200 L35.800,-3.600 L40.600,-5.600 L42.300,-8.500 L42.500,-13.300 L38.700,-17.400 L26.100,-19.100 L11.600,-26.300 C6,-28 -5,-28.200 -12.500,-26.800 L-29.900,-21 L-38.600,-18.100Z"/><path fill="#10222b" d="M-29,-20 L-12.500,-25.600 L-3.800,-24.900 L-22.200,-18.600Z M5.800,-23.900 L13.500,-24.900 L23.700,-18.600 L9.700,-20.100Z M-31.900,-12.800 L-22.700,-10.900 L-23.200,-9.400 L-31.400,-11.300Z"/><ellipse cx="1.5" cy="0.7" rx="5.5" ry="9.1" fill="#10222b" transform="rotate(12 1.5 0.7)"/><ellipse cx="1.5" cy="0.7" rx="3.7" ry="6.9" fill="none" stroke="#27c6f5" stroke-width="1.4" transform="rotate(12 1.5 0.7)"/><ellipse cx="38.2" cy="-9.4" rx="3" ry="5.1" fill="#10222b" transform="rotate(10 38.2 -9.4)"/><ellipse cx="38.2" cy="-9.4" rx="1.8" ry="3.6" fill="none" stroke="#27c6f5" stroke-width="0.9" transform="rotate(10 38.2 -9.4)"/><path fill="#25b4e8" d="M-39.600,4.600 C-50,10 -58,17 -59.900,23 C-60,27 -58,30 -56,31 C-56.500,22 -50,12 -39.600,4.600Z"/><path fill="#25b4e8" d="M-7.200,12.800 C-15,17 -19,23 -16.800,30 C-12,42 2,52 14,60.500 L22,58 C6,49 -8,38 -12.500,28 C-14,22 -12,17 -7.200,12.800Z"/><path fill="#25b4e8" d="M31.900,-0.700 C24,3 20,8 21.500,13 C25,21 42,27 58,31.500 L60,27.500 C45,24 30,18 25.500,12 C23.500,8 26,3 31.900,-0.700Z"/></svg>
<svg class="a" style="left:3449.5px;top:650.7px" width="140" height="54" viewBox="-70 -3 140 54"><path d="M-55.9,2 a2,2 0 0 1 2,-2 h13 a2,2 0 0 1 2,2 v15.500 L-47.4,11.9 L-55.9,17.5Z M-47.40,16.00 L-43.23,25.16 L-33.23,26.30 L-40.65,33.09 L-38.64,42.95 L-47.40,38.00 L-56.16,42.95 L-54.15,33.09 L-61.57,26.30 L-51.57,25.16Z" fill="#2b2b2e"/><path d="M-8.5,2 a2,2 0 0 1 2,-2 h13 a2,2 0 0 1 2,2 v15.500 L0,11.9 L-8.5,17.5Z M0.00,16.00 L4.17,25.16 L14.17,26.30 L6.75,33.09 L8.76,42.95 L0.00,38.00 L-8.76,42.95 L-6.75,33.09 L-14.17,26.30 L-4.17,25.16Z" fill="#2b2b2e"/><path d="M38.9,2 a2,2 0 0 1 2,-2 h13 a2,2 0 0 1 2,2 v15.500 L47.4,11.9 L38.9,17.5Z M47.40,16.00 L51.57,25.16 L61.57,26.30 L54.15,33.09 L56.16,42.95 L47.40,38.00 L38.64,42.95 L40.65,33.09 L33.23,26.30 L43.23,25.16Z" fill="#2b2b2e"/></svg>
<div class="card" style="left:1308.0px;top:757.3px"></div>
<div class="t" style="top:798.6px;font-size:31px;color:#969696;word-spacing:2px;left:546.2px;width:2000px;text-align:center;">Χρηματικό Έπαθλο</div>
<svg class="a" style="left:1440.7px;top:868.2px" width="210" height="210" viewBox="-105 -105 210 210"><circle r="66" fill="#1b1d1f"/><circle r="95.700" fill="none" stroke="#37393a" stroke-width="5.200"/><circle r="82.600" fill="none" stroke="#37393a" stroke-width="5.200"/><circle r="68.200" fill="none" stroke="#37393a" stroke-width="5.600"/><path d="M0,-98.500 V-65.500 M0,65.500 V98.500" stroke="rgba(20,22,24,0.18)" stroke-width="1.100"/><circle r="68.2" fill="none" stroke="#4cc22c" stroke-width="5.3"/><path d="M0.00,-82.60 A82.6,82.6 0 0 1 4.32,-82.49" fill="none" stroke="#93dc7a" stroke-width="5.0"/><g filter="url(#fg)" opacity="0.38"><rect x="-39.7" y="-7.9" width="66" height="28.9" fill="none" stroke="#55ee22" stroke-width="3"/><rect x="-35.5" y="-3.700000000000001" width="57.6" height="20.5" fill="#55ee22"/><ellipse cx="-7.3000000000000025" cy="6.549999999999999" rx="11" ry="11.440000000000001" fill="#1b1c1e"/><path fill="none" stroke="#55ee22" stroke-width="3" d="M-33.7,-13.4 H32.3 V13.1"/><path fill="none" stroke="#55ee22" stroke-width="3" d="M-27.700000000000003,-18.9 H38.3 V7.6"/></g><rect x="-39.7" y="-7.9" width="66" height="28.9" fill="none" stroke="#55ee22" stroke-width="3"/><rect x="-35.5" y="-3.700000000000001" width="57.6" height="20.5" fill="#55ee22"/><ellipse cx="-7.3000000000000025" cy="6.549999999999999" rx="11" ry="11.440000000000001" fill="#1b1c1e"/><path fill="none" stroke="#55ee22" stroke-width="3" d="M-33.7,-13.4 H32.3 V13.1"/><path fill="none" stroke="#55ee22" stroke-width="3" d="M-27.700000000000003,-18.9 H38.3 V7.6"/></svg>
<svg class="a" style="left:1475.7px;top:1100.6px" width="140" height="54" viewBox="-70 -3 140 54"><path d="M-55.9,2 a2,2 0 0 1 2,-2 h13 a2,2 0 0 1 2,2 v15.500 L-47.4,11.9 L-55.9,17.5Z" fill="#90df78"/><path d="M-47.40,16.00 L-43.23,25.16 L-33.23,26.30 L-40.65,33.09 L-38.64,42.95 L-47.40,38.00 L-56.16,42.95 L-54.15,33.09 L-61.57,26.30 L-51.57,25.16Z" fill="#90df78" stroke="#12280c" stroke-width="2.2" paint-order="stroke" stroke-linejoin="miter"/><path d="M-8.5,2 a2,2 0 0 1 2,-2 h13 a2,2 0 0 1 2,2 v15.500 L0,11.9 L-8.5,17.5Z M0.00,16.00 L4.17,25.16 L14.17,26.30 L6.75,33.09 L8.76,42.95 L0.00,38.00 L-8.76,42.95 L-6.75,33.09 L-14.17,26.30 L-4.17,25.16Z" fill="#2b2b2e"/><path d="M38.9,2 a2,2 0 0 1 2,-2 h13 a2,2 0 0 1 2,2 v15.500 L47.4,11.9 L38.9,17.5Z M47.40,16.00 L51.57,25.16 L61.57,26.30 L54.15,33.09 L56.16,42.95 L47.40,38.00 L38.64,42.95 L40.65,33.09 L33.23,26.30 L43.23,25.16Z" fill="#2b2b2e"/></svg>
<div class="card" style="left:1800.7px;top:757.3px"></div>
<div class="t" style="top:798.6px;font-size:31px;color:#969696;letter-spacing:0.02px;word-spacing:2.5px;left:1822.1px;">Πόντοι Χιλιομέτρων που ...</div>
<svg class="a" style="left:1933.4px;top:868.2px" width="210" height="210" viewBox="-105 -105 210 210"><circle r="66" fill="#1b1d1f"/><circle r="95.700" fill="none" stroke="#37393a" stroke-width="5.200"/><circle r="82.600" fill="none" stroke="#37393a" stroke-width="5.200"/><circle r="68.200" fill="none" stroke="#37393a" stroke-width="5.600"/><path d="M0,-98.500 V-65.500 M0,65.500 V98.500" stroke="rgba(20,22,24,0.18)" stroke-width="1.100"/><circle r="68.2" fill="none" stroke="#4cc22c" stroke-width="5.3"/><path d="M0.00,-82.60 A82.6,82.6 0 0 1 30.94,-76.59" fill="none" stroke="#93dc7a" stroke-width="5.0"/><g filter="url(#fg)" opacity="0.38"><path fill="url(#gg)" d="M-53.700,15.400 L-28.500,-24.900 L-13.100,-24.900 L-13.100,0.200 L4.500,-14.100 L4.500,-0.100 L-12.100,15.400 L-23.700,15.400 L-23.700,-9.200 L-39.200,15.400Z M5.400,-0.500 L16.100,-9.500 L16.100,15.400 L5.400,15.400Z M5,-24.500 L15.400,-24.500 L5,-15.300Z"/><path fill="#55ee22" d="M33.100,-17.200 h7 v2.300 h-7Z M33.100,-11.900 h7 v2.300 h-7Z M33.100,-6.500 h7 v4.200 h5.400 L36.600,9.700 L27.700,-2.300 h5.400Z M22.300,13 h28.600 v2.500 h-28.600Z"/></g><path fill="url(#gg)" d="M-53.700,15.400 L-28.500,-24.900 L-13.100,-24.900 L-13.100,0.200 L4.500,-14.100 L4.500,-0.100 L-12.100,15.400 L-23.700,15.400 L-23.700,-9.200 L-39.200,15.400Z M5.400,-0.500 L16.100,-9.500 L16.100,15.400 L5.400,15.400Z M5,-24.500 L15.400,-24.500 L5,-15.300Z"/><path fill="#55ee22" d="M33.100,-17.200 h7 v2.300 h-7Z M33.100,-11.900 h7 v2.300 h-7Z M33.100,-6.500 h7 v4.200 h5.400 L36.600,9.700 L27.700,-2.300 h5.400Z M22.300,13 h28.600 v2.500 h-28.600Z"/></svg>
<svg class="a" style="left:1968.4px;top:1100.6px" width="140" height="54" viewBox="-70 -3 140 54"><path d="M-55.9,2 a2,2 0 0 1 2,-2 h13 a2,2 0 0 1 2,2 v15.500 L-47.4,11.9 L-55.9,17.5Z" fill="#90df78"/><path d="M-47.40,16.00 L-43.23,25.16 L-33.23,26.30 L-40.65,33.09 L-38.64,42.95 L-47.40,38.00 L-56.16,42.95 L-54.15,33.09 L-61.57,26.30 L-51.57,25.16Z" fill="#90df78" stroke="#12280c" stroke-width="2.2" paint-order="stroke" stroke-linejoin="miter"/><path d="M-8.5,2 a2,2 0 0 1 2,-2 h13 a2,2 0 0 1 2,2 v15.500 L0,11.9 L-8.5,17.5Z M0.00,16.00 L4.17,25.16 L14.17,26.30 L6.75,33.09 L8.76,42.95 L0.00,38.00 L-8.76,42.95 L-6.75,33.09 L-14.17,26.30 L-4.17,25.16Z" fill="#2b2b2e"/><path d="M38.9,2 a2,2 0 0 1 2,-2 h13 a2,2 0 0 1 2,2 v15.500 L47.4,11.9 L38.9,17.5Z M47.40,16.00 L51.57,25.16 L61.57,26.30 L54.15,33.09 L56.16,42.95 L47.40,38.00 L38.64,42.95 L40.65,33.09 L33.23,26.30 L43.23,25.16Z" fill="#2b2b2e"/></svg>
<div class="card" style="left:2294.0px;top:757.3px"></div>
<div class="t" style="top:798.6px;font-size:31px;color:#969696;letter-spacing:0.02px;word-spacing:2.5px;left:2315.4px;">Πόντοι Χιλιομέτρων που ...</div>
<svg class="a" style="left:2426.7px;top:868.2px" width="210" height="210" viewBox="-105 -105 210 210"><circle r="66" fill="#1b1d1f"/><circle r="95.700" fill="none" stroke="#37393a" stroke-width="5.200"/><circle r="82.600" fill="none" stroke="#37393a" stroke-width="5.200"/><circle r="68.200" fill="none" stroke="#37393a" stroke-width="5.600"/><path d="M0,-98.500 V-65.500 M0,65.500 V98.500" stroke="rgba(20,22,24,0.18)" stroke-width="1.100"/><path d="M0.00,-68.20 A68.2,68.2 0 1 1 -55.17,-40.09" fill="none" stroke="#4cc22c" stroke-width="5.3"/><g filter="url(#fg)" opacity="0.38"><path fill="url(#gg)" d="M-53.700,15.400 L-28.500,-24.900 L-13.100,-24.900 L-13.100,0.200 L4.500,-14.100 L4.500,-0.100 L-12.100,15.400 L-23.700,15.400 L-23.700,-9.200 L-39.200,15.400Z M5.400,-0.500 L16.100,-9.500 L16.100,15.400 L5.400,15.400Z M5,-24.500 L15.400,-24.500 L5,-15.300Z"/><path fill="#55ee22" d="M22.600,13.800 C23.500,7 30,1.200 38.800,0.600 L38.800,-5.200 L50.400,3.100 L38.800,11.800 L38.800,6 C32,6 27,9 22.600,13.800Z"/></g><path fill="url(#gg)" d="M-53.700,15.400 L-28.500,-24.900 L-13.100,-24.900 L-13.100,0.200 L4.500,-14.100 L4.500,-0.100 L-12.100,15.400 L-23.700,15.400 L-23.700,-9.200 L-39.200,15.400Z M5.400,-0.500 L16.100,-9.500 L16.100,15.400 L5.400,15.400Z M5,-24.500 L15.400,-24.500 L5,-15.300Z"/><path fill="#55ee22" d="M22.600,13.800 C23.500,7 30,1.200 38.800,0.600 L38.800,-5.200 L50.400,3.100 L38.800,11.800 L38.800,6 C32,6 27,9 22.600,13.800Z"/></svg>
<svg class="a" style="left:2461.7px;top:1100.6px" width="140" height="54" viewBox="-70 -3 140 54"><path d="M-55.9,2 a2,2 0 0 1 2,-2 h13 a2,2 0 0 1 2,2 v15.500 L-47.4,11.9 L-55.9,17.5Z M-47.40,16.00 L-43.23,25.16 L-33.23,26.30 L-40.65,33.09 L-38.64,42.95 L-47.40,38.00 L-56.16,42.95 L-54.15,33.09 L-61.57,26.30 L-51.57,25.16Z" fill="#2b2b2e"/><path d="M-8.5,2 a2,2 0 0 1 2,-2 h13 a2,2 0 0 1 2,2 v15.500 L0,11.9 L-8.5,17.5Z M0.00,16.00 L4.17,25.16 L14.17,26.30 L6.75,33.09 L8.76,42.95 L0.00,38.00 L-8.76,42.95 L-6.75,33.09 L-14.17,26.30 L-4.17,25.16Z" fill="#2b2b2e"/><path d="M38.9,2 a2,2 0 0 1 2,-2 h13 a2,2 0 0 1 2,2 v15.500 L47.4,11.9 L38.9,17.5Z M47.40,16.00 L51.57,25.16 L61.57,26.30 L54.15,33.09 L56.16,42.95 L47.40,38.00 L38.64,42.95 L40.65,33.09 L33.23,26.30 L43.23,25.16Z" fill="#2b2b2e"/></svg>
<div class="card" style="left:2788.0px;top:757.3px"></div>
<div class="t" style="top:798.6px;font-size:31px;color:#969696;word-spacing:2px;left:2026.2px;width:2000px;text-align:center;">Αγορασμένα Αυτοκίνητα</div>
<svg class="a" style="left:2920.7px;top:868.2px" width="210" height="210" viewBox="-105 -105 210 210"><circle r="66" fill="#1b1d1f"/><circle r="95.700" fill="none" stroke="#37393a" stroke-width="5.200"/><circle r="82.600" fill="none" stroke="#37393a" stroke-width="5.200"/><circle r="68.200" fill="none" stroke="#37393a" stroke-width="5.600"/><path d="M0,-98.500 V-65.500 M0,65.500 V98.500" stroke="rgba(20,22,24,0.18)" stroke-width="1.100"/><path d="M0.00,-68.20 A68.2,68.2 0 0 1 61.81,28.82" fill="none" stroke="#4cc22c" stroke-width="5.3"/><g filter="url(#fg)" opacity="0.38"><path fill="#55ee22" fill-rule="evenodd" d="M-14.700,-36.900 a11.200,11.200 0 0 1 10.800,8.200 H23.500 L25.900,-27 L23.500,-23 L21.500,-20.800 L19.500,-23 L17.500,-20.800 L15.500,-23 L13.500,-20.800 L11.500,-23 L9.500,-20.800 L7.500,-23 L5.500,-20.800 L3.500,-23 H-3.900 a11.200,11.200 0 1 1 -10.800,-13.900Z M-22,-25.900 a2.500,2.500 0 1 0 5,0 a2.500,2.500 0 1 0 -5,0Z"/><path d="M-3,-29.400 H22" stroke="#15250f" stroke-width="0.9"/><g transform="translate(0,0) scale(1.0,1.0)"><path fill="url(#gg)" d="M-15.900,-3.200 H14.700 C17,-3.200 18.500,-2 19.500,0 L22.500,7 L29.600,6 L29.600,8.400 L24.500,9.500 C27.500,12 29.200,15 29.200,19 V30.800 H27.600 V35.400 H18.900 V30.800 H-18.800 V35.400 H-27.100 V30.800 H-28.500 V19 C-28.500,15 -27,12 -24.500,9.500 L-29.600,8.400 L-29.600,6 L-23,7 L-20.500,0 C-19.500,-2 -18,-3.200 -15.900,-3.200Z"/><path fill="#15250f" d="M-14.700,-0.300 H14.300 L18.500,7.600 H-18.400Z M-26.600,14.700 C-23,15 -18,17 -15.200,19.800 L-15.600,20.700 C-19,20.700 -23.500,20.300 -26,19.300Z M27,14.700 C23.400,15 18.400,17 15.600,19.800 L16,20.700 C19.400,20.700 23.900,20.300 26.400,19.300Z M-11.800,18.800 H11.400 V21.300 H-11.800Z M-11.800,25 H11.400 V28.700 H-11.800Z"/></g></g><path fill="#55ee22" fill-rule="evenodd" d="M-14.700,-36.900 a11.200,11.200 0 0 1 10.800,8.200 H23.500 L25.900,-27 L23.500,-23 L21.500,-20.800 L19.500,-23 L17.500,-20.800 L15.500,-23 L13.500,-20.800 L11.500,-23 L9.500,-20.800 L7.500,-23 L5.500,-20.800 L3.500,-23 H-3.900 a11.200,11.200 0 1 1 -10.800,-13.900Z M-22,-25.900 a2.500,2.500 0 1 0 5,0 a2.500,2.500 0 1 0 -5,0Z"/><path d="M-3,-29.400 H22" stroke="#15250f" stroke-width="0.9"/><g transform="translate(0,0) scale(1.0,1.0)"><path fill="url(#gg)" d="M-15.900,-3.200 H14.700 C17,-3.200 18.500,-2 19.500,0 L22.500,7 L29.600,6 L29.600,8.400 L24.500,9.500 C27.500,12 29.200,15 29.200,19 V30.800 H27.600 V35.400 H18.900 V30.800 H-18.800 V35.400 H-27.100 V30.800 H-28.500 V19 C-28.500,15 -27,12 -24.500,9.500 L-29.600,8.400 L-29.600,6 L-23,7 L-20.500,0 C-19.500,-2 -18,-3.200 -15.900,-3.200Z"/><path fill="#15250f" d="M-14.700,-0.300 H14.300 L18.500,7.600 H-18.400Z M-26.600,14.700 C-23,15 -18,17 -15.200,19.800 L-15.600,20.700 C-19,20.700 -23.500,20.300 -26,19.300Z M27,14.700 C23.400,15 18.400,17 15.600,19.800 L16,20.700 C19.400,20.700 23.900,20.300 26.400,19.300Z M-11.800,18.800 H11.400 V21.300 H-11.800Z M-11.800,25 H11.400 V28.700 H-11.800Z"/></g></svg>
<svg class="a" style="left:2955.7px;top:1100.6px" width="140" height="54" viewBox="-70 -3 140 54"><path d="M-55.9,2 a2,2 0 0 1 2,-2 h13 a2,2 0 0 1 2,2 v15.500 L-47.4,11.9 L-55.9,17.5Z M-47.40,16.00 L-43.23,25.16 L-33.23,26.30 L-40.65,33.09 L-38.64,42.95 L-47.40,38.00 L-56.16,42.95 L-54.15,33.09 L-61.57,26.30 L-51.57,25.16Z" fill="#2b2b2e"/><path d="M-8.5,2 a2,2 0 0 1 2,-2 h13 a2,2 0 0 1 2,2 v15.500 L0,11.9 L-8.5,17.5Z M0.00,16.00 L4.17,25.16 L14.17,26.30 L6.75,33.09 L8.76,42.95 L0.00,38.00 L-8.76,42.95 L-6.75,33.09 L-14.17,26.30 L-4.17,25.16Z" fill="#2b2b2e"/><path d="M38.9,2 a2,2 0 0 1 2,-2 h13 a2,2 0 0 1 2,2 v15.500 L47.4,11.9 L38.9,17.5Z M47.40,16.00 L51.57,25.16 L61.57,26.30 L54.15,33.09 L56.16,42.95 L47.40,38.00 L38.64,42.95 L40.65,33.09 L33.23,26.30 L43.23,25.16Z" fill="#2b2b2e"/></svg>
<div class="card" style="left:3281.8px;top:757.3px"></div>
<div class="t" style="top:798.6px;font-size:31px;color:#969696;letter-spacing:0.02px;word-spacing:2.5px;left:3303.2px;">Αξία Αγορασμένων Αυτοκι...</div>
<svg class="a" style="left:3414.5px;top:868.2px" width="210" height="210" viewBox="-105 -105 210 210"><circle r="66" fill="#1b1d1f"/><circle r="95.700" fill="none" stroke="#37393a" stroke-width="5.200"/><circle r="82.600" fill="none" stroke="#37393a" stroke-width="5.200"/><circle r="68.200" fill="none" stroke="#37393a" stroke-width="5.600"/><path d="M0,-98.500 V-65.500 M0,65.500 V98.500" stroke="rgba(20,22,24,0.18)" stroke-width="1.100"/><path d="M0.00,-68.20 A68.2,68.2 0 0 1 9.49,-67.54" fill="none" stroke="#4cc22c" stroke-width="5.3"/><g filter="url(#fg)" opacity="0.38"><rect x="-23.8" y="-32.4" width="43.1" height="19.1" fill="none" stroke="#55ee22" stroke-width="2"/><rect x="-21.0" y="-29.599999999999998" width="37.5" height="13.500000000000002" fill="#55ee22"/><ellipse cx="-2.85" cy="-22.849999999999998" rx="7.3" ry="7.592" fill="#1b1c1e"/><path fill="none" stroke="#55ee22" stroke-width="2" d="M-19.900000000000002,-36.199999999999996 H23.2 V-18.7"/><path fill="none" stroke="#55ee22" stroke-width="2" d="M-16.0,-40.0 H27.1 V-22.5"/><g transform="translate(0,0) scale(1.0,1.0)"><path fill="url(#gg)" d="M-15.900,-3.200 H14.700 C17,-3.200 18.500,-2 19.500,0 L22.500,7 L29.600,6 L29.600,8.400 L24.500,9.500 C27.500,12 29.200,15 29.200,19 V30.800 H27.600 V35.400 H18.900 V30.800 H-18.800 V35.400 H-27.100 V30.800 H-28.500 V19 C-28.500,15 -27,12 -24.500,9.500 L-29.600,8.400 L-29.600,6 L-23,7 L-20.500,0 C-19.500,-2 -18,-3.200 -15.900,-3.200Z"/><path fill="#15250f" d="M-14.700,-0.300 H14.300 L18.500,7.600 H-18.400Z M-26.600,14.700 C-23,15 -18,17 -15.200,19.800 L-15.600,20.700 C-19,20.700 -23.500,20.300 -26,19.300Z M27,14.700 C23.400,15 18.400,17 15.600,19.800 L16,20.700 C19.400,20.700 23.900,20.300 26.400,19.300Z M-11.800,18.800 H11.400 V21.300 H-11.800Z M-11.800,25 H11.400 V28.700 H-11.800Z"/></g></g><rect x="-23.8" y="-32.4" width="43.1" height="19.1" fill="none" stroke="#55ee22" stroke-width="2"/><rect x="-21.0" y="-29.599999999999998" width="37.5" height="13.500000000000002" fill="#55ee22"/><ellipse cx="-2.85" cy="-22.849999999999998" rx="7.3" ry="7.592" fill="#1b1c1e"/><path fill="none" stroke="#55ee22" stroke-width="2" d="M-19.900000000000002,-36.199999999999996 H23.2 V-18.7"/><path fill="none" stroke="#55ee22" stroke-width="2" d="M-16.0,-40.0 H27.1 V-22.5"/><g transform="translate(0,0) scale(1.0,1.0)"><path fill="url(#gg)" d="M-15.900,-3.200 H14.700 C17,-3.200 18.500,-2 19.500,0 L22.500,7 L29.600,6 L29.600,8.400 L24.500,9.500 C27.500,12 29.200,15 29.200,19 V30.800 H27.600 V35.400 H18.900 V30.800 H-18.800 V35.400 H-27.100 V30.800 H-28.500 V19 C-28.500,15 -27,12 -24.500,9.500 L-29.600,8.400 L-29.600,6 L-23,7 L-20.500,0 C-19.500,-2 -18,-3.200 -15.900,-3.200Z"/><path fill="#15250f" d="M-14.700,-0.300 H14.300 L18.500,7.600 H-18.400Z M-26.600,14.700 C-23,15 -18,17 -15.200,19.800 L-15.600,20.700 C-19,20.700 -23.500,20.300 -26,19.300Z M27,14.700 C23.400,15 18.400,17 15.600,19.800 L16,20.700 C19.400,20.700 23.900,20.300 26.400,19.300Z M-11.800,18.800 H11.400 V21.300 H-11.800Z M-11.800,25 H11.400 V28.700 H-11.800Z"/></g></svg>
<svg class="a" style="left:3449.5px;top:1100.6px" width="140" height="54" viewBox="-70 -3 140 54"><path d="M-55.9,2 a2,2 0 0 1 2,-2 h13 a2,2 0 0 1 2,2 v15.500 L-47.4,11.9 L-55.9,17.5Z M-47.40,16.00 L-43.23,25.16 L-33.23,26.30 L-40.65,33.09 L-38.64,42.95 L-47.40,38.00 L-56.16,42.95 L-54.15,33.09 L-61.57,26.30 L-51.57,25.16Z" fill="#2b2b2e"/><path d="M-8.5,2 a2,2 0 0 1 2,-2 h13 a2,2 0 0 1 2,2 v15.500 L0,11.9 L-8.5,17.5Z M0.00,16.00 L4.17,25.16 L14.17,26.30 L6.75,33.09 L8.76,42.95 L0.00,38.00 L-8.76,42.95 L-6.75,33.09 L-14.17,26.30 L-4.17,25.16Z" fill="#2b2b2e"/><path d="M38.9,2 a2,2 0 0 1 2,-2 h13 a2,2 0 0 1 2,2 v15.500 L47.4,11.9 L38.9,17.5Z M47.40,16.00 L51.57,25.16 L61.57,26.30 L54.15,33.09 L56.16,42.95 L47.40,38.00 L38.64,42.95 L40.65,33.09 L33.23,26.30 L43.23,25.16Z" fill="#2b2b2e"/></svg>
<div class="card" style="left:1308.0px;top:1207.5px"></div>
<div class="t" style="top:1248.8px;font-size:31px;color:#969696;word-spacing:2px;left:546.2px;width:2000px;text-align:center;">Αγώνες Χωρίς Ατυχήματα</div>
<svg class="a" style="left:1440.7px;top:1318.4px" width="210" height="210" viewBox="-105 -105 210 210"><circle r="66" fill="#1b1d1f"/><circle r="95.700" fill="none" stroke="#37393a" stroke-width="5.200"/><circle r="82.600" fill="none" stroke="#37393a" stroke-width="5.200"/><circle r="68.200" fill="none" stroke="#37393a" stroke-width="5.600"/><path d="M0,-98.500 V-65.500 M0,65.500 V98.500" stroke="rgba(20,22,24,0.18)" stroke-width="1.100"/><g filter="url(#fm)" opacity="0.38"><path fill="url(#gm)" d="M-0.600,-45.500 C10,-45.500 17,-38 17,-27 C17,-18 14,-11 10.500,-6.500 C14,-3 22,0 28,3 C31,5 31,10 31,20 H-32 V8 C-32,4 -30,3 -26,1 C-20,-1 -14,-3 -11.500,-6.500 C-15,-11 -18,-18 -18,-27 C-18,-38 -11,-45.500 -0.600,-45.500Z"/><path fill="#2a1226" d="M-13,-26.800 L12,-26.800 Q12,-18 4,-18 L-5,-18 Q-13,-18 -13,-26.800Z"/><path d="M13.500,-4.500 L21.500,11" stroke="#1b1c1e" stroke-width="4"/><circle cx="-0.600" cy="23" r="25.300" fill="#1b1c1e"/><circle cx="-0.600" cy="23" r="22.300" fill="url(#gm)"/><path fill="#2a1226" d="M-16.500,19 C-12,9 -5,7.500 -0.600,7.500 C4,7.500 11,9 15.300,19 C8,16.500 -9,16.500 -16.500,19Z"/><path fill="#2a1226" d="M-17,26 C-12,25.500 -6,27 -4,30 L-3.500,40 C-10,39 -15.500,33 -17,26Z M15.800,26 C10.800,25.500 4.800,27 2.800,30 L2.300,40 C8.800,39 14.300,33 15.800,26Z"/><circle cx="-0.600" cy="23" r="2.800" fill="#2a1226"/></g><path fill="url(#gm)" d="M-0.600,-45.500 C10,-45.500 17,-38 17,-27 C17,-18 14,-11 10.500,-6.500 C14,-3 22,0 28,3 C31,5 31,10 31,20 H-32 V8 C-32,4 -30,3 -26,1 C-20,-1 -14,-3 -11.500,-6.500 C-15,-11 -18,-18 -18,-27 C-18,-38 -11,-45.500 -0.600,-45.500Z"/><path fill="#2a1226" d="M-13,-26.800 L12,-26.800 Q12,-18 4,-18 L-5,-18 Q-13,-18 -13,-26.800Z"/><path d="M13.500,-4.500 L21.500,11" stroke="#1b1c1e" stroke-width="4"/><circle cx="-0.600" cy="23" r="25.300" fill="#1b1c1e"/><circle cx="-0.600" cy="23" r="22.300" fill="url(#gm)"/><path fill="#2a1226" d="M-16.500,19 C-12,9 -5,7.500 -0.600,7.500 C4,7.500 11,9 15.300,19 C8,16.500 -9,16.500 -16.500,19Z"/><path fill="#2a1226" d="M-17,26 C-12,25.500 -6,27 -4,30 L-3.500,40 C-10,39 -15.500,33 -17,26Z M15.800,26 C10.800,25.500 4.800,27 2.800,30 L2.300,40 C8.800,39 14.300,33 15.800,26Z"/><circle cx="-0.600" cy="23" r="2.800" fill="#2a1226"/></svg>
<svg class="a" style="left:1475.7px;top:1550.8px" width="140" height="54" viewBox="-70 -3 140 54"><path d="M-55.9,2 a2,2 0 0 1 2,-2 h13 a2,2 0 0 1 2,2 v15.500 L-47.4,11.9 L-55.9,17.5Z M-47.40,16.00 L-43.23,25.16 L-33.23,26.30 L-40.65,33.09 L-38.64,42.95 L-47.40,38.00 L-56.16,42.95 L-54.15,33.09 L-61.57,26.30 L-51.57,25.16Z" fill="#2b2b2e"/><path d="M-8.5,2 a2,2 0 0 1 2,-2 h13 a2,2 0 0 1 2,2 v15.500 L0,11.9 L-8.5,17.5Z M0.00,16.00 L4.17,25.16 L14.17,26.30 L6.75,33.09 L8.76,42.95 L0.00,38.00 L-8.76,42.95 L-6.75,33.09 L-14.17,26.30 L-4.17,25.16Z" fill="#2b2b2e"/><path d="M38.9,2 a2,2 0 0 1 2,-2 h13 a2,2 0 0 1 2,2 v15.500 L47.4,11.9 L38.9,17.5Z M47.40,16.00 L51.57,25.16 L61.57,26.30 L54.15,33.09 L56.16,42.95 L47.40,38.00 L38.64,42.95 L40.65,33.09 L33.23,26.30 L43.23,25.16Z" fill="#2b2b2e"/></svg>
<div class="card" style="left:1800.7px;top:1207.5px"></div>
<div class="t" style="top:1248.8px;font-size:31px;color:#969696;word-spacing:2px;left:1039.0px;width:2000px;text-align:center;">Pole Positions</div>
<svg class="a" style="left:1933.4px;top:1318.4px" width="210" height="210" viewBox="-105 -105 210 210"><circle r="66" fill="#1b1d1f"/><circle r="95.700" fill="none" stroke="#37393a" stroke-width="5.200"/><circle r="82.600" fill="none" stroke="#37393a" stroke-width="5.200"/><circle r="68.200" fill="none" stroke="#37393a" stroke-width="5.600"/><path d="M0,-98.500 V-65.500 M0,65.500 V98.500" stroke="rgba(20,22,24,0.18)" stroke-width="1.100"/><g filter="url(#fm)" opacity="0.38"><rect x="-24.9" y="-36.200" width="10" height="10" fill="#ff25c8"/><rect x="-4.6" y="-36.200" width="10" height="10" fill="#ff25c8"/><rect x="15.7" y="-36.200" width="10" height="10" fill="#ff25c8"/><rect x="-34.8" y="-26.200" width="10" height="10" fill="#ff25c8"/><rect x="-14.9" y="-26.200" width="10" height="10" fill="#ff25c8"/><rect x="5.3" y="-26.200" width="10" height="10" fill="#ff25c8"/><rect x="25.2" y="-26.200" width="10" height="10" fill="#ff25c8"/><path fill="#ff25c8" d="M-32.800,-5.500 H33.200 a2,2 0 0 1 2,2 V13.500 H28.500 V1.100 H-28.200 V13.500 H-34.800 V-3.500 a2,2 0 0 1 2,-2Z"/><text x="-14.600" y="40.400" font-family="Liberation Sans, sans-serif" font-weight="bold" font-size="41" fill="#ff25c8">1</text></g><rect x="-24.9" y="-36.200" width="10" height="10" fill="#ff25c8"/><rect x="-4.6" y="-36.200" width="10" height="10" fill="#ff25c8"/><rect x="15.7" y="-36.200" width="10" height="10" fill="#ff25c8"/><rect x="-34.8" y="-26.200" width="10" height="10" fill="#ff25c8"/><rect x="-14.9" y="-26.200" width="10" height="10" fill="#ff25c8"/><rect x="5.3" y="-26.200" width="10" height="10" fill="#ff25c8"/><rect x="25.2" y="-26.200" width="10" height="10" fill="#ff25c8"/><path fill="#ff25c8" d="M-32.800,-5.500 H33.200 a2,2 0 0 1 2,2 V13.500 H28.500 V1.100 H-28.200 V13.500 H-34.800 V-3.500 a2,2 0 0 1 2,-2Z"/><text x="-14.600" y="40.400" font-family="Liberation Sans, sans-serif" font-weight="bold" font-size="41" fill="#ff25c8">1</text></svg>
<svg class="a" style="left:1968.4px;top:1550.8px" width="140" height="54" viewBox="-70 -3 140 54"><path d="M-55.9,2 a2,2 0 0 1 2,-2 h13 a2,2 0 0 1 2,2 v15.500 L-47.4,11.9 L-55.9,17.5Z M-47.40,16.00 L-43.23,25.16 L-33.23,26.30 L-40.65,33.09 L-38.64,42.95 L-47.40,38.00 L-56.16,42.95 L-54.15,33.09 L-61.57,26.30 L-51.57,25.16Z" fill="#2b2b2e"/><path d="M-8.5,2 a2,2 0 0 1 2,-2 h13 a2,2 0 0 1 2,2 v15.500 L0,11.9 L-8.5,17.5Z M0.00,16.00 L4.17,25.16 L14.17,26.30 L6.75,33.09 L8.76,42.95 L0.00,38.00 L-8.76,42.95 L-6.75,33.09 L-14.17,26.30 L-4.17,25.16Z" fill="#2b2b2e"/><path d="M38.9,2 a2,2 0 0 1 2,-2 h13 a2,2 0 0 1 2,2 v15.500 L47.4,11.9 L38.9,17.5Z M47.40,16.00 L51.57,25.16 L61.57,26.30 L54.15,33.09 L56.16,42.95 L47.40,38.00 L38.64,42.95 L40.65,33.09 L33.23,26.30 L43.23,25.16Z" fill="#2b2b2e"/></svg>
<div class="card" style="left:2294.0px;top:1207.5px"></div>
<div class="t" style="top:1248.8px;font-size:31px;color:#969696;word-spacing:2px;left:1532.2px;width:2000px;text-align:center;">Ταχύτεροι Γύροι</div>
<svg class="a" style="left:2426.7px;top:1318.4px" width="210" height="210" viewBox="-105 -105 210 210"><circle r="66" fill="#1b1d1f"/><circle r="95.700" fill="none" stroke="#37393a" stroke-width="5.200"/><circle r="82.600" fill="none" stroke="#37393a" stroke-width="5.200"/><circle r="68.200" fill="none" stroke="#37393a" stroke-width="5.600"/><path d="M0,-98.500 V-65.500 M0,65.500 V98.500" stroke="rgba(20,22,24,0.18)" stroke-width="1.100"/><g filter="url(#fm)" opacity="0.38"><path fill="none" stroke="#ff25c8" stroke-width="7" d="M22.600,-23.400 A23.400,23.400 0 0 1 21.800,23.400 H-21.300 A23.400,23.400 0 0 1 -21.300,-23.400 H-7"/><path fill="#ff25c8" d="M-7.600,-30.400 V-16.300 L3.100,-23.300Z M5.200,-30.400 V-16.300 L16.800,-23.300Z"/></g><path fill="none" stroke="#ff25c8" stroke-width="7" d="M22.600,-23.400 A23.400,23.400 0 0 1 21.800,23.400 H-21.300 A23.400,23.400 0 0 1 -21.300,-23.400 H-7"/><path fill="#ff25c8" d="M-7.600,-30.400 V-16.300 L3.100,-23.300Z M5.200,-30.400 V-16.300 L16.800,-23.300Z"/></svg>
<svg class="a" style="left:2461.7px;top:1550.8px" width="140" height="54" viewBox="-70 -3 140 54"><path d="M-55.9,2 a2,2 0 0 1 2,-2 h13 a2,2 0 0 1 2,2 v15.500 L-47.4,11.9 L-55.9,17.5Z M-47.40,16.00 L-43.23,25.16 L-33.23,26.30 L-40.65,33.09 L-38.64,42.95 L-47.40,38.00 L-56.16,42.95 L-54.15,33.09 L-61.57,26.30 L-51.57,25.16Z" fill="#2b2b2e"/><path d="M-8.5,2 a2,2 0 0 1 2,-2 h13 a2,2 0 0 1 2,2 v15.500 L0,11.9 L-8.5,17.5Z M0.00,16.00 L4.17,25.16 L14.17,26.30 L6.75,33.09 L8.76,42.95 L0.00,38.00 L-8.76,42.95 L-6.75,33.09 L-14.17,26.30 L-4.17,25.16Z" fill="#2b2b2e"/><path d="M38.9,2 a2,2 0 0 1 2,-2 h13 a2,2 0 0 1 2,2 v15.500 L47.4,11.9 L38.9,17.5Z M47.40,16.00 L51.57,25.16 L61.57,26.30 L54.15,33.09 L56.16,42.95 L47.40,38.00 L38.64,42.95 L40.65,33.09 L33.23,26.30 L43.23,25.16Z" fill="#2b2b2e"/></svg>
<div class="card" style="left:2788.0px;top:1207.5px"></div>
<div class="t" style="top:1248.8px;font-size:31px;color:#969696;letter-spacing:0.02px;word-spacing:2.5px;left:2809.4px;">Αγώνες που Ολοκληρώθη...</div>
<svg class="a" style="left:2920.7px;top:1318.4px" width="210" height="210" viewBox="-105 -105 210 210"><circle r="66" fill="#1b1d1f"/><circle r="95.700" fill="none" stroke="#37393a" stroke-width="5.200"/><circle r="82.600" fill="none" stroke="#37393a" stroke-width="5.200"/><circle r="68.200" fill="none" stroke="#37393a" stroke-width="5.600"/><path d="M0,-98.500 V-65.500 M0,65.500 V98.500" stroke="rgba(20,22,24,0.18)" stroke-width="1.100"/><path d="M0.00,-68.20 A68.2,68.2 0 0 1 39.12,-55.87" fill="none" stroke="#e0259d" stroke-width="5.3"/><g filter="url(#fm)" opacity="0.38"><g transform="translate(-3.500,-35.300) rotate(29.100)"><rect x="-4.600" y="0" width="4.600" height="71.500" fill="#ff25c8"/><rect x="0" y="0" width="61.200" height="40.800" fill="rgba(255,40,200,0.10)"/><rect x="10.2" y="0.0" width="10.200" height="10.200" fill="#ff25c8"/><rect x="30.6" y="0.0" width="10.200" height="10.200" fill="#ff25c8"/><rect x="51.0" y="0.0" width="10.200" height="10.200" fill="#ff25c8"/><rect x="0.0" y="10.2" width="10.200" height="10.200" fill="#ff25c8"/><rect x="20.4" y="10.2" width="10.200" height="10.200" fill="#ff25c8"/><rect x="40.8" y="10.2" width="10.200" height="10.200" fill="#ff25c8"/><rect x="10.2" y="20.4" width="10.200" height="10.200" fill="#ff25c8"/><rect x="30.6" y="20.4" width="10.200" height="10.200" fill="#ff25c8"/><rect x="51.0" y="20.4" width="10.200" height="10.200" fill="#ff25c8"/><rect x="0.0" y="30.6" width="10.200" height="10.200" fill="#ff25c8"/><rect x="20.4" y="30.6" width="10.200" height="10.200" fill="#ff25c8"/><rect x="40.8" y="30.6" width="10.200" height="10.200" fill="#ff25c8"/></g></g><g transform="translate(-3.500,-35.300) rotate(29.100)"><rect x="-4.600" y="0" width="4.600" height="71.500" fill="#ff25c8"/><rect x="0" y="0" width="61.200" height="40.800" fill="rgba(255,40,200,0.10)"/><rect x="10.2" y="0.0" width="10.200" height="10.200" fill="#ff25c8"/><rect x="30.6" y="0.0" width="10.200" height="10.200" fill="#ff25c8"/><rect x="51.0" y="0.0" width="10.200" height="10.200" fill="#ff25c8"/><rect x="0.0" y="10.2" width="10.200" height="10.200" fill="#ff25c8"/><rect x="20.4" y="10.2" width="10.200" height="10.200" fill="#ff25c8"/><rect x="40.8" y="10.2" width="10.200" height="10.200" fill="#ff25c8"/><rect x="10.2" y="20.4" width="10.200" height="10.200" fill="#ff25c8"/><rect x="30.6" y="20.4" width="10.200" height="10.200" fill="#ff25c8"/><rect x="51.0" y="20.4" width="10.200" height="10.200" fill="#ff25c8"/><rect x="0.0" y="30.6" width="10.200" height="10.200" fill="#ff25c8"/><rect x="20.4" y="30.6" width="10.200" height="10.200" fill="#ff25c8"/><rect x="40.8" y="30.6" width="10.200" height="10.200" fill="#ff25c8"/></g></svg>
<svg class="a" style="left:2955.7px;top:1550.8px" width="140" height="54" viewBox="-70 -3 140 54"><path d="M-55.9,2 a2,2 0 0 1 2,-2 h13 a2,2 0 0 1 2,2 v15.500 L-47.4,11.9 L-55.9,17.5Z M-47.40,16.00 L-43.23,25.16 L-33.23,26.30 L-40.65,33.09 L-38.64,42.95 L-47.40,38.00 L-56.16,42.95 L-54.15,33.09 L-61.57,26.30 L-51.57,25.16Z" fill="#2b2b2e"/><path d="M-8.5,2 a2,2 0 0 1 2,-2 h13 a2,2 0 0 1 2,2 v15.500 L0,11.9 L-8.5,17.5Z M0.00,16.00 L4.17,25.16 L14.17,26.30 L6.75,33.09 L8.76,42.95 L0.00,38.00 L-8.76,42.95 L-6.75,33.09 L-14.17,26.30 L-4.17,25.16Z" fill="#2b2b2e"/><path d="M38.9,2 a2,2 0 0 1 2,-2 h13 a2,2 0 0 1 2,2 v15.500 L47.4,11.9 L38.9,17.5Z M47.40,16.00 L51.57,25.16 L61.57,26.30 L54.15,33.09 L56.16,42.95 L47.40,38.00 L38.64,42.95 L40.65,33.09 L33.23,26.30 L43.23,25.16Z" fill="#2b2b2e"/></svg>
<div class="card" style="left:3281.8px;top:1207.5px"></div>
<div class="t" style="top:1248.8px;font-size:31px;color:#969696;word-spacing:2px;left:2520.1px;width:2000px;text-align:center;">Νίκες</div>
<svg class="a" style="left:3414.5px;top:1318.4px" width="210" height="210" viewBox="-105 -105 210 210"><circle r="66" fill="#1b1d1f"/><circle r="95.700" fill="none" stroke="#37393a" stroke-width="5.200"/><circle r="82.600" fill="none" stroke="#37393a" stroke-width="5.200"/><circle r="68.200" fill="none" stroke="#37393a" stroke-width="5.600"/><path d="M0,-98.500 V-65.500 M0,65.500 V98.500" stroke="rgba(20,22,24,0.18)" stroke-width="1.100"/><g filter="url(#fm)" opacity="0.38"><path fill="url(#gm)" fill-rule="evenodd" d="M-27.700,-39 H28.200 C28,-20 20,-5 7,6 C4,9 3.300,11 3.300,14 L3.300,18 C3.300,22 5,25 7.500,28 L10,33 L16.600,35.500 V39.200 H-15.700 V35.500 L-9,33 L-6.500,28 C-4,25 -2.500,22 -2.500,18 V14 C-2.500,11 -3.500,9 -6.500,6 C-19.500,-5 -27.500,-20 -27.700,-39Z M-22.500,-34.500 H-15 C-15,-25 -13.500,-14 -11,-8 C-17,-15 -21.500,-25 -22.500,-34.500Z M23,-34.500 H15.700 C15.700,-25 14.200,-14 11.700,-8 C17.700,-15 22,-25 23,-34.500Z"/></g><path fill="url(#gm)" fill-rule="evenodd" d="M-27.700,-39 H28.200 C28,-20 20,-5 7,6 C4,9 3.300,11 3.300,14 L3.300,18 C3.300,22 5,25 7.500,28 L10,33 L16.600,35.500 V39.200 H-15.700 V35.500 L-9,33 L-6.500,28 C-4,25 -2.500,22 -2.500,18 V14 C-2.500,11 -3.500,9 -6.500,6 C-19.500,-5 -27.500,-20 -27.700,-39Z M-22.500,-34.500 H-15 C-15,-25 -13.500,-14 -11,-8 C-17,-15 -21.500,-25 -22.500,-34.500Z M23,-34.500 H15.700 C15.700,-25 14.200,-14 11.700,-8 C17.700,-15 22,-25 23,-34.500Z"/></svg>
<svg class="a" style="left:3449.5px;top:1550.8px" width="140" height="54" viewBox="-70 -3 140 54"><path d="M-55.9,2 a2,2 0 0 1 2,-2 h13 a2,2 0 0 1 2,2 v15.500 L-47.4,11.9 L-55.9,17.5Z M-47.40,16.00 L-43.23,25.16 L-33.23,26.30 L-40.65,33.09 L-38.64,42.95 L-47.40,38.00 L-56.16,42.95 L-54.15,33.09 L-61.57,26.30 L-51.57,25.16Z" fill="#2b2b2e"/><path d="M-8.5,2 a2,2 0 0 1 2,-2 h13 a2,2 0 0 1 2,2 v15.500 L0,11.9 L-8.5,17.5Z M0.00,16.00 L4.17,25.16 L14.17,26.30 L6.75,33.09 L8.76,42.95 L0.00,38.00 L-8.76,42.95 L-6.75,33.09 L-14.17,26.30 L-4.17,25.16Z" fill="#2b2b2e"/><path d="M38.9,2 a2,2 0 0 1 2,-2 h13 a2,2 0 0 1 2,2 v15.500 L47.4,11.9 L38.9,17.5Z M47.40,16.00 L51.57,25.16 L61.57,26.30 L54.15,33.09 L56.16,42.95 L47.40,38.00 L38.64,42.95 L40.65,33.09 L33.23,26.30 L43.23,25.16Z" fill="#2b2b2e"/></svg>
<div class="card" style="left:1308.0px;top:1657.6px"></div>
<div class="t" style="top:1698.9px;font-size:31px;color:#969696;letter-spacing:0.02px;word-spacing:2.5px;left:1329.4px;">Φωτογραφίες που Ελήφθ...</div>
<svg class="a" style="left:1440.7px;top:1768.5px" width="210" height="210" viewBox="-105 -105 210 210"><circle r="66" fill="#1b1d1f"/><circle r="95.700" fill="none" stroke="#37393a" stroke-width="5.200"/><circle r="82.600" fill="none" stroke="#37393a" stroke-width="5.200"/><circle r="68.200" fill="none" stroke="#37393a" stroke-width="5.600"/><path d="M0,-98.500 V-65.500 M0,65.500 V98.500" stroke="rgba(20,22,24,0.18)" stroke-width="1.100"/><circle r="68.2" fill="none" stroke="#e07219" stroke-width="5.3"/><path d="M0.00,-82.60 A82.6,82.6 0 0 1 59.42,-57.38" fill="none" stroke="#e09a5c" stroke-width="5.0"/><g filter="url(#fo)" opacity="0.38"><g transform="translate(0,0)"><path fill="url(#go)" d="M-31.500,-17.700 H-17.300 L-14,-24 a2,2 0 0 1 1.700,-1.200 H2 a2,2 0 0 1 1.700,1.200 L6.700,-17.700 H20.900 a4,4 0 0 1 4,4 V18 a4,4 0 0 1 -4,4 H-31.500 a4,4 0 0 1 -4,-4 V-13.700 a4,4 0 0 1 4,-4Z"/><circle cx="-5.700" cy="2.600" r="12.900" fill="none" stroke="#4a2a10" stroke-width="4"/><circle cx="15.800" cy="-9" r="2.300" fill="#4a2a10"/></g><path fill="#ff8a1c" d="M29.4,-33.9 h5 v7 h7 v5 h-7 v7 h-5 v-7 h-7 v-5 h7Z"/></g><g transform="translate(0,0)"><path fill="url(#go)" d="M-31.500,-17.700 H-17.300 L-14,-24 a2,2 0 0 1 1.700,-1.200 H2 a2,2 0 0 1 1.700,1.200 L6.700,-17.700 H20.900 a4,4 0 0 1 4,4 V18 a4,4 0 0 1 -4,4 H-31.500 a4,4 0 0 1 -4,-4 V-13.700 a4,4 0 0 1 4,-4Z"/><circle cx="-5.700" cy="2.600" r="12.900" fill="none" stroke="#4a2a10" stroke-width="4"/><circle cx="15.800" cy="-9" r="2.300" fill="#4a2a10"/></g><path fill="#ff8a1c" d="M29.4,-33.9 h5 v7 h7 v5 h-7 v7 h-5 v-7 h-7 v-5 h7Z"/></svg>
<svg class="a" style="left:1475.7px;top:2000.9px" width="140" height="54" viewBox="-70 -3 140 54"><path d="M-55.9,2 a2,2 0 0 1 2,-2 h13 a2,2 0 0 1 2,2 v15.500 L-47.4,11.9 L-55.9,17.5Z" fill="#f2b07e"/><path d="M-47.40,16.00 L-43.23,25.16 L-33.23,26.30 L-40.65,33.09 L-38.64,42.95 L-47.40,38.00 L-56.16,42.95 L-54.15,33.09 L-61.57,26.30 L-51.57,25.16Z" fill="#f2b07e" stroke="#301806" stroke-width="2.2" paint-order="stroke" stroke-linejoin="miter"/><path d="M-8.5,2 a2,2 0 0 1 2,-2 h13 a2,2 0 0 1 2,2 v15.500 L0,11.9 L-8.5,17.5Z M0.00,16.00 L4.17,25.16 L14.17,26.30 L6.75,33.09 L8.76,42.95 L0.00,38.00 L-8.76,42.95 L-6.75,33.09 L-14.17,26.30 L-4.17,25.16Z" fill="#2b2b2e"/><path d="M38.9,2 a2,2 0 0 1 2,-2 h13 a2,2 0 0 1 2,2 v15.500 L47.4,11.9 L38.9,17.5Z M47.40,16.00 L51.57,25.16 L61.57,26.30 L54.15,33.09 L56.16,42.95 L47.40,38.00 L38.64,42.95 L40.65,33.09 L33.23,26.30 L43.23,25.16Z" fill="#2b2b2e"/></svg>
<div class="card" style="left:1800.7px;top:1657.6px"></div>
<div class="t" style="top:1698.9px;font-size:31px;color:#969696;letter-spacing:0.02px;word-spacing:2.5px;left:1822.1px;">Εμφανίσεις που Δημιουργ...</div>
<svg class="a" style="left:1933.4px;top:1768.5px" width="210" height="210" viewBox="-105 -105 210 210"><circle r="66" fill="#1b1d1f"/><circle r="95.700" fill="none" stroke="#37393a" stroke-width="5.200"/><circle r="82.600" fill="none" stroke="#37393a" stroke-width="5.200"/><circle r="68.200" fill="none" stroke="#37393a" stroke-width="5.600"/><path d="M0,-98.500 V-65.500 M0,65.500 V98.500" stroke="rgba(20,22,24,0.18)" stroke-width="1.100"/><path d="M0.00,-68.20 A68.2,68.2 0 1 1 -40.09,55.17" fill="none" stroke="#e07219" stroke-width="5.3"/><g filter="url(#fo)" opacity="0.38"><g transform="translate(-2.9,-17.8) scale(1.245,1.29)"><path fill="url(#go)" d="M-15.900,-3.200 H14.700 C17,-3.200 18.500,-2 19.500,0 L22.500,7 L29.600,6 L29.600,8.400 L24.500,9.500 C27.500,12 29.200,15 29.200,19 V30.800 H27.600 V35.400 H18.900 V30.800 H-18.800 V35.400 H-27.100 V30.800 H-28.500 V19 C-28.500,15 -27,12 -24.500,9.500 L-29.600,8.400 L-29.600,6 L-23,7 L-20.500,0 C-19.500,-2 -18,-3.200 -15.900,-3.200Z"/><path fill="#3a2008" d="M-14.700,-0.300 H14.300 L18.500,7.600 H-18.400Z M-26.600,14.700 C-23,15 -18,17 -15.200,19.800 L-15.600,20.700 C-19,20.700 -23.500,20.300 -26,19.300Z M27,14.700 C23.400,15 18.400,17 15.600,19.800 L16,20.700 C19.400,20.700 23.900,20.300 26.400,19.300Z M-11.800,18.800 H11.400 V21.300 H-11.800Z M-11.800,25 H11.400 V28.700 H-11.800Z M-5.800,7.600 H-1.700 V18.800 H-5.800Z M1.300,7.600 H5.400 V18.800 H1.300Z"/></g><path fill="#ff8a1c" d="M30.200000000000003,-33.9 h5 v7 h7 v5 h-7 v7 h-5 v-7 h-7 v-5 h7Z"/></g><g transform="translate(-2.9,-17.8) scale(1.245,1.29)"><path fill="url(#go)" d="M-15.900,-3.200 H14.700 C17,-3.200 18.500,-2 19.500,0 L22.500,7 L29.600,6 L29.600,8.400 L24.500,9.500 C27.500,12 29.200,15 29.200,19 V30.800 H27.600 V35.400 H18.900 V30.800 H-18.800 V35.400 H-27.100 V30.800 H-28.500 V19 C-28.500,15 -27,12 -24.500,9.500 L-29.600,8.400 L-29.600,6 L-23,7 L-20.500,0 C-19.500,-2 -18,-3.200 -15.900,-3.200Z"/><path fill="#3a2008" d="M-14.700,-0.300 H14.300 L18.500,7.600 H-18.400Z M-26.600,14.700 C-23,15 -18,17 -15.200,19.800 L-15.600,20.700 C-19,20.700 -23.500,20.300 -26,19.300Z M27,14.700 C23.400,15 18.400,17 15.600,19.800 L16,20.700 C19.400,20.700 23.900,20.300 26.400,19.300Z M-11.800,18.800 H11.400 V21.300 H-11.800Z M-11.800,25 H11.400 V28.700 H-11.800Z M-5.800,7.600 H-1.700 V18.800 H-5.800Z M1.300,7.600 H5.400 V18.800 H1.300Z"/></g><path fill="#ff8a1c" d="M30.200000000000003,-33.9 h5 v7 h7 v5 h-7 v7 h-5 v-7 h-7 v-5 h7Z"/></svg>
<svg class="a" style="left:1968.4px;top:2000.9px" width="140" height="54" viewBox="-70 -3 140 54"><path d="M-55.9,2 a2,2 0 0 1 2,-2 h13 a2,2 0 0 1 2,2 v15.500 L-47.4,11.9 L-55.9,17.5Z M-47.40,16.00 L-43.23,25.16 L-33.23,26.30 L-40.65,33.09 L-38.64,42.95 L-47.40,38.00 L-56.16,42.95 L-54.15,33.09 L-61.57,26.30 L-51.57,25.16Z" fill="#2b2b2e"/><path d="M-8.5,2 a2,2 0 0 1 2,-2 h13 a2,2 0 0 1 2,2 v15.500 L0,11.9 L-8.5,17.5Z M0.00,16.00 L4.17,25.16 L14.17,26.30 L6.75,33.09 L8.76,42.95 L0.00,38.00 L-8.76,42.95 L-6.75,33.09 L-14.17,26.30 L-4.17,25.16Z" fill="#2b2b2e"/><path d="M38.9,2 a2,2 0 0 1 2,-2 h13 a2,2 0 0 1 2,2 v15.500 L47.4,11.9 L38.9,17.5Z M47.40,16.00 L51.57,25.16 L61.57,26.30 L54.15,33.09 L56.16,42.95 L47.40,38.00 L38.64,42.95 L40.65,33.09 L33.23,26.30 L43.23,25.16Z" fill="#2b2b2e"/></svg>
<div class="card" style="left:2294.0px;top:1657.6px"></div>
<div class="t" style="top:1698.9px;font-size:31px;color:#969696;letter-spacing:0.02px;word-spacing:2.5px;left:2315.4px;">Αριθμός «Μου Αρέσει» για...</div>
<svg class="a" style="left:2426.7px;top:1768.5px" width="210" height="210" viewBox="-105 -105 210 210"><circle r="66" fill="#1b1d1f"/><circle r="95.700" fill="none" stroke="#37393a" stroke-width="5.200"/><circle r="82.600" fill="none" stroke="#37393a" stroke-width="5.200"/><circle r="68.200" fill="none" stroke="#37393a" stroke-width="5.600"/><path d="M0,-98.500 V-65.500 M0,65.500 V98.500" stroke="rgba(20,22,24,0.18)" stroke-width="1.100"/><g filter="url(#fo)" opacity="0.38"><g transform="translate(0.8,0)"><path fill="url(#go)" d="M-31.500,-17.700 H-17.300 L-14,-24 a2,2 0 0 1 1.700,-1.200 H2 a2,2 0 0 1 1.700,1.200 L6.700,-17.700 H20.900 a4,4 0 0 1 4,4 V18 a4,4 0 0 1 -4,4 H-31.500 a4,4 0 0 1 -4,-4 V-13.700 a4,4 0 0 1 4,-4Z"/><circle cx="-5.700" cy="2.600" r="12.900" fill="none" stroke="#4a2a10" stroke-width="4"/><circle cx="15.800" cy="-9" r="2.300" fill="#4a2a10"/></g><path fill="#ff8a1c" transform="translate(33,-24.8) scale(1.0)" d="M0,9.500 L-8.500,0.500 C-11,-2.500 -10.500,-6.500 -7.500,-8.200 C-4.800,-9.700 -1.500,-8.800 0,-6 C1.500,-8.800 4.800,-9.700 7.500,-8.200 C10.500,-6.500 11,-2.500 8.500,0.500Z"/></g><g transform="translate(0.8,0)"><path fill="url(#go)" d="M-31.500,-17.700 H-17.300 L-14,-24 a2,2 0 0 1 1.700,-1.200 H2 a2,2 0 0 1 1.700,1.200 L6.700,-17.700 H20.900 a4,4 0 0 1 4,4 V18 a4,4 0 0 1 -4,4 H-31.500 a4,4 0 0 1 -4,-4 V-13.700 a4,4 0 0 1 4,-4Z"/><circle cx="-5.700" cy="2.600" r="12.900" fill="none" stroke="#4a2a10" stroke-width="4"/><circle cx="15.800" cy="-9" r="2.300" fill="#4a2a10"/></g><path fill="#ff8a1c" transform="translate(33,-24.8) scale(1.0)" d="M0,9.500 L-8.500,0.500 C-11,-2.500 -10.500,-6.500 -7.500,-8.200 C-4.800,-9.700 -1.500,-8.800 0,-6 C1.500,-8.800 4.800,-9.700 7.500,-8.200 C10.500,-6.500 11,-2.500 8.500,0.500Z"/></svg>
<svg class="a" style="left:2461.7px;top:2000.9px" width="140" height="54" viewBox="-70 -3 140 54"><path d="M-55.9,2 a2,2 0 0 1 2,-2 h13 a2,2 0 0 1 2,2 v15.500 L-47.4,11.9 L-55.9,17.5Z M-47.40,16.00 L-43.23,25.16 L-33.23,26.30 L-40.65,33.09 L-38.64,42.95 L-47.40,38.00 L-56.16,42.95 L-54.15,33.09 L-61.57,26.30 L-51.57,25.16Z" fill="#2b2b2e"/><path d="M-8.5,2 a2,2 0 0 1 2,-2 h13 a2,2 0 0 1 2,2 v15.500 L0,11.9 L-8.5,17.5Z M0.00,16.00 L4.17,25.16 L14.17,26.30 L6.75,33.09 L8.76,42.95 L0.00,38.00 L-8.76,42.95 L-6.75,33.09 L-14.17,26.30 L-4.17,25.16Z" fill="#2b2b2e"/><path d="M38.9,2 a2,2 0 0 1 2,-2 h13 a2,2 0 0 1 2,2 v15.500 L47.4,11.9 L38.9,17.5Z M47.40,16.00 L51.57,25.16 L61.57,26.30 L54.15,33.09 L56.16,42.95 L47.40,38.00 L38.64,42.95 L40.65,33.09 L33.23,26.30 L43.23,25.16Z" fill="#2b2b2e"/></svg>
<div class="card" style="left:2788.0px;top:1657.6px"></div>
<div class="t" style="top:1698.9px;font-size:31px;color:#969696;letter-spacing:0.02px;word-spacing:2.5px;left:2809.4px;">Αριθμός «Μου Αρέσει» για...</div>
<svg class="a" style="left:2920.7px;top:1768.5px" width="210" height="210" viewBox="-105 -105 210 210"><circle r="66" fill="#1b1d1f"/><circle r="95.700" fill="none" stroke="#37393a" stroke-width="5.200"/><circle r="82.600" fill="none" stroke="#37393a" stroke-width="5.200"/><circle r="68.200" fill="none" stroke="#37393a" stroke-width="5.600"/><path d="M0,-98.500 V-65.500 M0,65.500 V98.500" stroke="rgba(20,22,24,0.18)" stroke-width="1.100"/><g filter="url(#fo)" opacity="0.38"><g transform="translate(-2.9,-17.8) scale(1.245,1.29)"><path fill="url(#go)" d="M-15.900,-3.200 H14.700 C17,-3.200 18.500,-2 19.500,0 L22.500,7 L29.600,6 L29.600,8.400 L24.500,9.500 C27.500,12 29.200,15 29.200,19 V30.800 H27.600 V35.400 H18.900 V30.800 H-18.800 V35.400 H-27.100 V30.800 H-28.500 V19 C-28.500,15 -27,12 -24.500,9.500 L-29.600,8.400 L-29.600,6 L-23,7 L-20.500,0 C-19.500,-2 -18,-3.200 -15.900,-3.200Z"/><path fill="#3a2008" d="M-14.700,-0.300 H14.300 L18.500,7.600 H-18.400Z M-26.600,14.700 C-23,15 -18,17 -15.200,19.800 L-15.600,20.700 C-19,20.700 -23.500,20.300 -26,19.300Z M27,14.700 C23.400,15 18.400,17 15.600,19.800 L16,20.700 C19.400,20.700 23.900,20.300 26.400,19.300Z M-11.800,18.800 H11.400 V21.300 H-11.800Z M-11.800,25 H11.400 V28.700 H-11.800Z M-5.800,7.600 H-1.700 V18.800 H-5.800Z M1.300,7.600 H5.400 V18.800 H1.300Z"/></g><path fill="#ff8a1c" transform="translate(30,-27.5) scale(0.95)" d="M0,9.500 L-8.500,0.500 C-11,-2.500 -10.500,-6.500 -7.500,-8.200 C-4.800,-9.700 -1.500,-8.800 0,-6 C1.500,-8.800 4.800,-9.700 7.500,-8.200 C10.500,-6.500 11,-2.500 8.500,0.500Z"/></g><g transform="translate(-2.9,-17.8) scale(1.245,1.29)"><path fill="url(#go)" d="M-15.900,-3.200 H14.700 C17,-3.200 18.500,-2 19.500,0 L22.500,7 L29.600,6 L29.600,8.400 L24.500,9.500 C27.500,12 29.200,15 29.200,19 V30.800 H27.600 V35.400 H18.900 V30.800 H-18.800 V35.400 H-27.100 V30.800 H-28.500 V19 C-28.500,15 -27,12 -24.500,9.500 L-29.600,8.400 L-29.600,6 L-23,7 L-20.500,0 C-19.500,-2 -18,-3.200 -15.900,-3.200Z"/><path fill="#3a2008" d="M-14.700,-0.300 H14.300 L18.500,7.600 H-18.400Z M-26.600,14.700 C-23,15 -18,17 -15.200,19.800 L-15.600,20.700 C-19,20.700 -23.500,20.300 -26,19.300Z M27,14.700 C23.400,15 18.400,17 15.600,19.800 L16,20.700 C19.400,20.700 23.900,20.300 26.400,19.300Z M-11.800,18.800 H11.400 V21.300 H-11.800Z M-11.800,25 H11.400 V28.700 H-11.800Z M-5.800,7.600 H-1.700 V18.800 H-5.800Z M1.300,7.600 H5.400 V18.800 H1.300Z"/></g><path fill="#ff8a1c" transform="translate(30,-27.5) scale(0.95)" d="M0,9.500 L-8.500,0.500 C-11,-2.500 -10.500,-6.500 -7.500,-8.200 C-4.800,-9.700 -1.500,-8.800 0,-6 C1.500,-8.800 4.800,-9.700 7.500,-8.200 C10.500,-6.500 11,-2.500 8.500,0.500Z"/></svg>
<svg class="a" style="left:2955.7px;top:2000.9px" width="140" height="54" viewBox="-70 -3 140 54"><path d="M-55.9,2 a2,2 0 0 1 2,-2 h13 a2,2 0 0 1 2,2 v15.500 L-47.4,11.9 L-55.9,17.5Z M-47.40,16.00 L-43.23,25.16 L-33.23,26.30 L-40.65,33.09 L-38.64,42.95 L-47.40,38.00 L-56.16,42.95 L-54.15,33.09 L-61.57,26.30 L-51.57,25.16Z" fill="#2b2b2e"/><path d="M-8.5,2 a2,2 0 0 1 2,-2 h13 a2,2 0 0 1 2,2 v15.500 L0,11.9 L-8.5,17.5Z M0.00,16.00 L4.17,25.16 L14.17,26.30 L6.75,33.09 L8.76,42.95 L0.00,38.00 L-8.76,42.95 L-6.75,33.09 L-14.17,26.30 L-4.17,25.16Z" fill="#2b2b2e"/><path d="M38.9,2 a2,2 0 0 1 2,-2 h13 a2,2 0 0 1 2,2 v15.500 L47.4,11.9 L38.9,17.5Z M47.40,16.00 L51.57,25.16 L61.57,26.30 L54.15,33.09 L56.16,42.95 L47.40,38.00 L38.64,42.95 L40.65,33.09 L33.23,26.30 L43.23,25.16Z" fill="#2b2b2e"/></svg>
<div class="card" style="left:3281.8px;top:1657.6px"></div>
<div class="t" style="top:1698.9px;font-size:31px;color:#969696;word-spacing:2px;left:2520.1px;width:2000px;text-align:center;">Αριθμός Συνδέσεων</div>
<svg class="a" style="left:3414.5px;top:1768.5px" width="210" height="210" viewBox="-105 -105 210 210"><circle r="66" fill="#1b1d1f"/><circle r="95.700" fill="none" stroke="#37393a" stroke-width="5.200"/><circle r="82.600" fill="none" stroke="#37393a" stroke-width="5.200"/><circle r="68.200" fill="none" stroke="#37393a" stroke-width="5.600"/><path d="M0,-98.500 V-65.500 M0,65.500 V98.500" stroke="rgba(20,22,24,0.18)" stroke-width="1.100"/><path d="M0.00,-68.20 A68.2,68.2 0 0 1 34.10,59.06" fill="none" stroke="#e07219" stroke-width="5.3"/><g filter="url(#fo)" opacity="0.38"><path fill="none" stroke="#ff8a1c" stroke-width="5" stroke-linejoin="round" d="M-28.400,-14.500 V-28.400 H28.400 V28.400 H-28.400 V14.500"/><path fill="url(#go)" d="M-30.900,-5.700 H-7 V-14.500 L11.500,0 L-7,14.300 V5.700 H-30.900Z"/></g><path fill="none" stroke="#ff8a1c" stroke-width="5" stroke-linejoin="round" d="M-28.400,-14.500 V-28.400 H28.400 V28.400 H-28.400 V14.500"/><path fill="url(#go)" d="M-30.900,-5.700 H-7 V-14.500 L11.500,0 L-7,14.300 V5.700 H-30.900Z"/></svg>
<svg class="a" style="left:3449.5px;top:2000.9px" width="140" height="54" viewBox="-70 -3 140 54"><path d="M-55.9,2 a2,2 0 0 1 2,-2 h13 a2,2 0 0 1 2,2 v15.500 L-47.4,11.9 L-55.9,17.5Z M-47.40,16.00 L-43.23,25.16 L-33.23,26.30 L-40.65,33.09 L-38.64,42.95 L-47.40,38.00 L-56.16,42.95 L-54.15,33.09 L-61.57,26.30 L-51.57,25.16Z" fill="#2b2b2e"/><path d="M-8.5,2 a2,2 0 0 1 2,-2 h13 a2,2 0 0 1 2,2 v15.500 L0,11.9 L-8.5,17.5Z M0.00,16.00 L4.17,25.16 L14.17,26.30 L6.75,33.09 L8.76,42.95 L0.00,38.00 L-8.76,42.95 L-6.75,33.09 L-14.17,26.30 L-4.17,25.16Z" fill="#2b2b2e"/><path d="M38.9,2 a2,2 0 0 1 2,-2 h13 a2,2 0 0 1 2,2 v15.500 L47.4,11.9 L38.9,17.5Z M47.40,16.00 L51.57,25.16 L61.57,26.30 L54.15,33.09 L56.16,42.95 L47.40,38.00 L38.64,42.95 L40.65,33.09 L33.23,26.30 L43.23,25.16Z" fill="#2b2b2e"/></svg>
<div id="tip"></div>
<div class="t" style="top:638.8px;font-size:33px;color:#d9d9d9;word-spacing:3px;left:795.0px;">Χρόνος Παιχνιδιού</div>
<div class="t" style="top:699.4px;font-size:32px;color:#c8c8c8;font-weight:normal;letter-spacing:0.47px;word-spacing:4px;left:795.0px;-webkit-text-stroke:0.3px #c8c8c8;">Μπορείτε να αποκτήσετε μπόνους</div>
<div class="t" style="top:749.3px;font-size:32px;color:#c8c8c8;font-weight:normal;letter-spacing:0.24px;word-spacing:4px;left:795.0px;-webkit-text-stroke:0.3px #c8c8c8;">επιτυχίας βάσει του χρόνου που περνάτε</div>
<div class="t" style="top:799.5px;font-size:32px;color:#c8c8c8;font-weight:normal;letter-spacing:0.6px;word-spacing:4px;left:795.0px;-webkit-text-stroke:0.3px #c8c8c8;">παίζοντας.</div>
<div style="position:absolute;left:754.5px;top:869px;width:712px;height:2px;background:rgba(255,255,255,0.085)"></div>
<svg class="a" style="left:790px;top:906px" width="34" height="42" viewBox="-17 -3 34 42"><g transform="scale(0.77)"><path d="M-8.5,2 a2,2 0 0 1 2,-2 h13 a2,2 0 0 1 2,2 v15.500 L0,11.9 L-8.5,17.5Z M0.00,16.00 L4.17,25.16 L14.17,26.30 L6.75,33.09 L8.76,42.95 L0.00,38.00 L-8.76,42.95 L-6.75,33.09 L-14.17,26.30 L-4.17,25.16Z" fill="#5d5d5d"/></g></svg>
<div class="t" style="top:909.6px;font-size:31px;color:#d2d2d2;letter-spacing:-0.4px;word-spacing:1px;left:834.6px;">Επίπεδο 1</div>
<div class="t" style="top:908.7px;font-size:32px;color:#d2d2d2;font-weight:normal;letter-spacing:0.9px;word-spacing:6px;left:-575.0px;width:2000px;text-align:right;-webkit-text-stroke:0.3px #d2d2d2;">6 Ώρες</div>
<div style="position:absolute;left:795px;top:977px;width:632px;height:12px;background:#3b3b3b"></div>
<div style="position:absolute;left:754.5px;top:1028.5px;width:712px;height:2px;background:rgba(255,255,255,0.085)"></div>
<svg class="a" style="left:790px;top:1065.5px" width="34" height="42" viewBox="-17 -3 34 42"><g transform="scale(0.77)"><path d="M-8.5,2 a2,2 0 0 1 2,-2 h13 a2,2 0 0 1 2,2 v15.500 L0,11.9 L-8.5,17.5Z M0.00,16.00 L4.17,25.16 L14.17,26.30 L6.75,33.09 L8.76,42.95 L0.00,38.00 L-8.76,42.95 L-6.75,33.09 L-14.17,26.30 L-4.17,25.16Z" fill="#5d5d5d"/></g></svg>
<div class="t" style="top:1069.1px;font-size:31px;color:#d2d2d2;letter-spacing:-0.4px;word-spacing:1px;left:834.6px;">Επίπεδο 2</div>
<div class="t" style="top:1068.2px;font-size:32px;color:#d2d2d2;font-weight:normal;letter-spacing:0.9px;word-spacing:6px;left:-575.0px;width:2000px;text-align:right;-webkit-text-stroke:0.3px #d2d2d2;">24 Ώρες</div>
<div style="position:absolute;left:795px;top:1136.5px;width:632px;height:12px;background:#3b3b3b"></div>
<div style="position:absolute;left:754.5px;top:1188px;width:712px;height:2px;background:rgba(255,255,255,0.085)"></div>
<svg class="a" style="left:790px;top:1225px" width="34" height="42" viewBox="-17 -3 34 42"><g transform="scale(0.77)"><path d="M-8.5,2 a2,2 0 0 1 2,-2 h13 a2,2 0 0 1 2,2 v15.500 L0,11.9 L-8.5,17.5Z M0.00,16.00 L4.17,25.16 L14.17,26.30 L6.75,33.09 L8.76,42.95 L0.00,38.00 L-8.76,42.95 L-6.75,33.09 L-14.17,26.30 L-4.17,25.16Z" fill="#5d5d5d"/></g></svg>
<div class="t" style="top:1228.6px;font-size:31px;color:#d2d2d2;letter-spacing:-0.4px;word-spacing:1px;left:834.6px;">Επίπεδο 3</div>
<div class="t" style="top:1227.7px;font-size:32px;color:#d2d2d2;font-weight:normal;letter-spacing:0.9px;word-spacing:6px;left:-575.0px;width:2000px;text-align:right;-webkit-text-stroke:0.3px #d2d2d2;">100 Ώρες</div>
<div style="position:absolute;left:795px;top:1296px;width:632px;height:12px;background:#3b3b3b"></div>
<div style="position:absolute;left:795px;top:977px;width:625.5px;height:12px;background:#27e9ff;box-shadow:0 0 8px 1px rgba(39,233,255,0.55)"></div>
<svg class="a" style="left:1390px;top:986px" width="60" height="80" viewBox="1390 986 60 80"><path fill="#c7c7c7" d="M1420.500,990 L1429.500,1004.400 H1438.700 a6,6 0 0 1 6,6 V1055 a6,6 0 0 1 -6,6 H1401.900 a6,6 0 0 1 -6,-6 V1010.400 a6,6 0 0 1 6,-6 H1411.500Z"/></svg>
<div class="t" style="top:1017.6px;font-size:30px;color:#323232;left:420.3px;width:2000px;text-align:center;">5</div>
<svg class="a" style="left:1470px;top:520px;filter:drop-shadow(2px 3px 3px rgba(0,0,0,0.55))" width="90" height="110" viewBox="1470 520 90 110"><path fill="#b3b3b3" d="M1486.300,532.500 L1486.300,615.400 L1509.500,592.600Z"/><path fill="#dedede" d="M1486.300,532.500 L1509.500,592.600 L1544.100,590.400Z"/></svg>
</body></html>
